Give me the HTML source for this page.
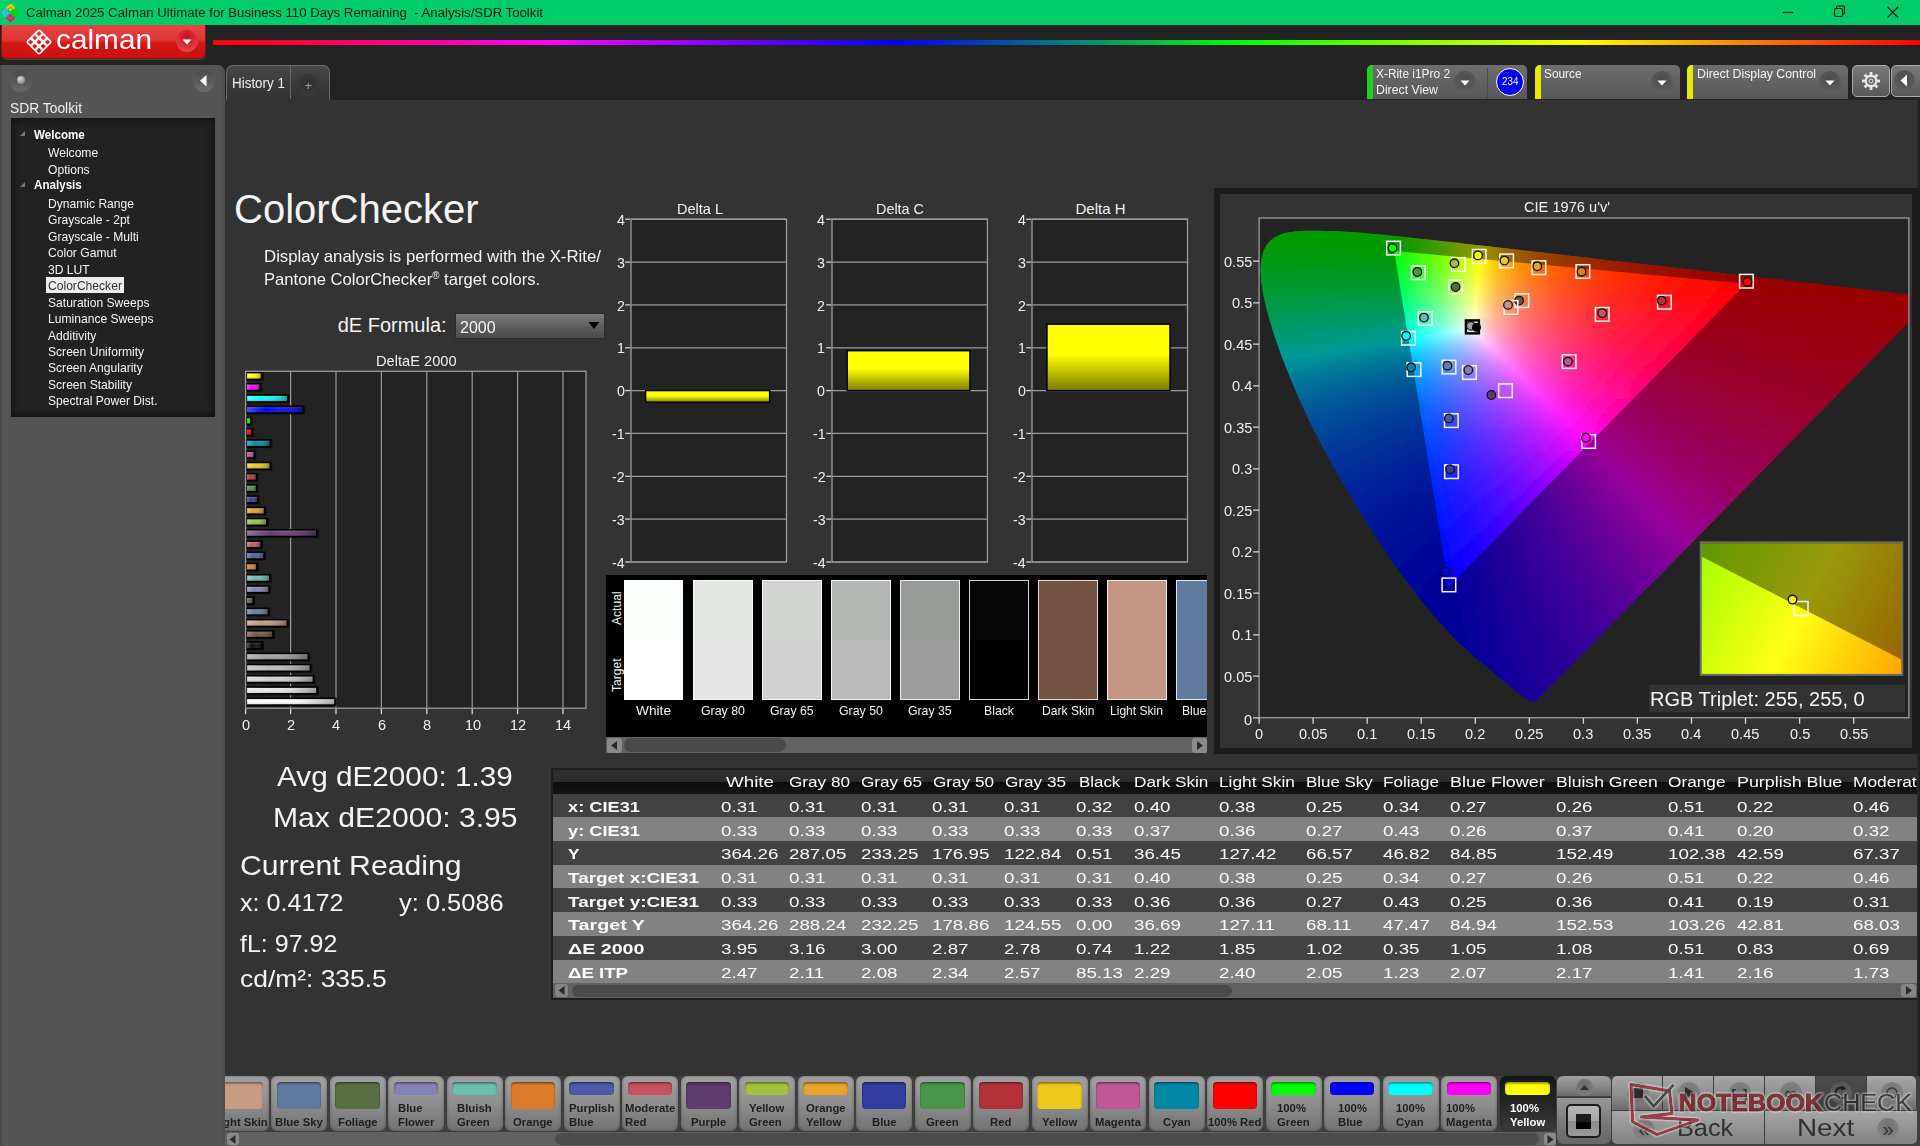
<!DOCTYPE html><html><head><meta charset="utf-8"><title>Calman</title><style>html,body{margin:0;padding:0;background:#333;}body{width:1920px;height:1146px;position:relative;overflow:hidden;font-family:"Liberation Sans",sans-serif;}div,svg{position:absolute;box-sizing:border-box}.t{position:absolute;white-space:nowrap;transform-origin:0 50%;display:block}svg text{font-family:"Liberation Sans",sans-serif}</style></head><body><div style="left:0px;top:0px;width:1920px;height:25px;background:#00cc6a"></div><svg style="left:0;top:0" width="24" height="25" viewBox="0 0 24 25" fill="none" stroke-width="2.3" stroke-linecap="round" stroke-linejoin="round"><path d="M7 8.1L10.5 4.7L14 8.1" stroke="#ffc800"/><path d="M10.5 7.7l1.9 1.9l-1.9 1.9l-1.9-1.9z" fill="#ffc800"/><path d="M6.1 9.2L2.9 12.8L6.1 16.4" stroke="#38c0ff"/><path d="M7.4 10.9l1.9 1.9l-1.9 1.9l-1.9-1.9z" fill="#38c0ff"/><path d="M15 8.3l4.4 4.5l-4.4 4.5l-4.4-4.5z" fill="#00d800"/><path d="M7 17.5L10.5 20.9L14 17.5" stroke="#ff1060"/><circle cx="10.5" cy="15.9" r="1.9" fill="#ff1060"/></svg><span class="t" style="left:26.0px;top:7.0px;font-size:12.5px;line-height:12.5px;color:#0a1a10;transform:scaleX(1.055);white-space:pre;">Calman 2025 Calman Ultimate for Business 110 Days Remaining  - Analysis/SDR Toolkit</span><svg style="left:1770px;top:0" width="150" height="25" viewBox="1770 0 150 25" fill="none" stroke="#111" stroke-width="1.1"><path d="M1783 12.5h10"/><rect x="1834.5" y="8.5" width="8" height="8" rx="1.5"/><path d="M1836.5 8.5v-1a1.5 1.5 0 0 1 1.5-1.5h5a1.5 1.5 0 0 1 1.5 1.5v5a1.5 1.5 0 0 1-1.5 1.5h-0.5"/><path d="M1887.5 7l10.5 10.5M1898 7l-10.5 10.5"/></svg><div style="left:0px;top:25px;width:1920px;height:75px;background:#232323"></div><div style="left:213px;top:40px;width:1707px;height:5px;background:linear-gradient(90deg,#f00 0%,#f0f 20%,#00f 40%,#0f0 60%,#ff0 80%,#f00 100%)"></div><div style="left:1px;top:25px;width:205px;height:34px;background:linear-gradient(#e64545 0%,#e03434 45%,#d21515 55%,#cc0f0f 100%);border-radius:0 0 6px 6px;border:1px solid #7a1a1a;border-top:none;box-shadow:0 1px 0 #444"></div><svg style="left:24px;top:27px" width="30" height="30" viewBox="-15 -15 30 30"><path transform="rotate(45)" fill="#fff" fill-rule="evenodd" d="M-9.4 -7.4a2 2 0 0 1 2-2h14.8a2 2 0 0 1 2 2v14.8a2 2 0 0 1-2 2h-14.8a2 2 0 0 1-2-2zM-7.85 -7.85h3.70v3.70h-3.70zM-7.85 -1.85h3.70v3.70h-3.70zM-7.85 4.15h3.70v3.70h-3.70zM-1.85 -7.85h3.70v3.70h-3.70zM-1.85 -1.85h3.70v3.70h-3.70zM-1.85 4.15h3.70v3.70h-3.70zM4.15 -7.85h3.70v3.70h-3.70zM4.15 -1.85h3.70v3.70h-3.70zM4.15 4.15h3.70v3.70h-3.70z"/></svg><span class="t" style="left:56.0px;top:25.6px;font-size:27.5px;line-height:27.5px;color:#fff;transform:scaleX(1.083);">calman</span><div style="left:175.5px;top:30.2px;width:22px;height:22px;border-radius:50%;background:radial-gradient(circle at 50% 30%,#c8101c,#e85050 95%)"></div><svg style="left:175.5px;top:30.2px" width="22" height="22"><path d="M6.5 9.5h9l-4.5 5z" fill="#fff"/></svg><div style="left:0px;top:65px;width:224.5px;height:1085px;background:#555;border-radius:0 7px 0 0;border-left:2px solid #484848;border-right:2px solid #4f4f4f"></div><div style="left:10px;top:70px;width:22px;height:22px;border-radius:50%;background:linear-gradient(#4a4a4a,#5a5a5a 55%,#6a6a6a)"></div><div style="left:17px;top:75.5px;width:8px;height:8px;border-radius:50%;background:radial-gradient(circle at 40% 35%,#ddd,#888 70%,#666)"></div><div style="left:192.5px;top:69.5px;width:22px;height:22px;border-radius:50%;background:linear-gradient(#4c4c4c,#5c5c5c 55%,#6c6c6c)"></div><svg style="left:192.5px;top:69.5px" width="22" height="22"><path d="M13.5 5v11.5l-6.5-5.75z" fill="#fff"/></svg><span class="t" style="left:10.0px;top:100.1px;font-size:15px;line-height:15px;color:#f0f0f0;transform:scaleX(0.922);">SDR Toolkit</span><div style="left:10.7px;top:118.1px;width:204.7px;height:298.8px;background:#222;box-shadow:inset 0 0 6px 2px #111"></div><span class="t" style="left:33.9px;top:128.5px;font-size:12.5px;line-height:12.5px;color:#fff;font-weight:700;transform:scaleX(0.930);">Welcome</span><svg style="left:19px;top:130.1px" width="8" height="8"><path d="M6 1v5h-5z" fill="#777"/></svg><span class="t" style="left:48.4px;top:145.9px;font-size:13px;line-height:13px;color:#f4f4f4;transform:scaleX(0.930);">Welcome</span><span class="t" style="left:48.4px;top:162.7px;font-size:13px;line-height:13px;color:#f4f4f4;transform:scaleX(0.930);">Options</span><span class="t" style="left:33.9px;top:179.2px;font-size:12.5px;line-height:12.5px;color:#fff;font-weight:700;transform:scaleX(0.930);">Analysis</span><svg style="left:19px;top:180.8px" width="8" height="8"><path d="M6 1v5h-5z" fill="#777"/></svg><span class="t" style="left:48.4px;top:196.6px;font-size:13px;line-height:13px;color:#f4f4f4;transform:scaleX(0.930);">Dynamic Range</span><span class="t" style="left:48.4px;top:213.1px;font-size:13px;line-height:13px;color:#f4f4f4;transform:scaleX(0.930);">Grayscale - 2pt</span><span class="t" style="left:48.4px;top:229.9px;font-size:13px;line-height:13px;color:#f4f4f4;transform:scaleX(0.930);">Grayscale - Multi</span><span class="t" style="left:48.4px;top:246.4px;font-size:13px;line-height:13px;color:#f4f4f4;transform:scaleX(0.930);">Color Gamut</span><span class="t" style="left:48.4px;top:262.8px;font-size:13px;line-height:13px;color:#f4f4f4;transform:scaleX(0.930);">3D LUT</span><div style="left:46.2px;top:277px;width:77.5px;height:15.8px;background:#ececec"></div><span class="t" style="left:48.4px;top:279.3px;font-size:13px;line-height:13px;color:#333;transform:scaleX(0.930);">ColorChecker</span><span class="t" style="left:48.4px;top:295.8px;font-size:13px;line-height:13px;color:#f4f4f4;transform:scaleX(0.930);">Saturation Sweeps</span><span class="t" style="left:48.4px;top:312.2px;font-size:13px;line-height:13px;color:#f4f4f4;transform:scaleX(0.930);">Luminance Sweeps</span><span class="t" style="left:48.4px;top:328.7px;font-size:13px;line-height:13px;color:#f4f4f4;transform:scaleX(0.930);">Additivity</span><span class="t" style="left:48.4px;top:345.2px;font-size:13px;line-height:13px;color:#f4f4f4;transform:scaleX(0.930);">Screen Uniformity</span><span class="t" style="left:48.4px;top:361.0px;font-size:13px;line-height:13px;color:#f4f4f4;transform:scaleX(0.930);">Screen Angularity</span><span class="t" style="left:48.4px;top:377.5px;font-size:13px;line-height:13px;color:#f4f4f4;transform:scaleX(0.930);">Screen Stability</span><span class="t" style="left:48.4px;top:394.0px;font-size:13px;line-height:13px;color:#f4f4f4;transform:scaleX(0.930);">Spectral Power Dist.</span><div style="left:225.5px;top:65px;width:104px;height:35px;background:linear-gradient(#484848,#383838 60%,#333);border:1px solid #6a6a6a;border-bottom:none;border-radius:7px 7px 0 0"></div><div style="left:290px;top:66px;width:1px;height:33px;background:#666"></div><span class="t" style="left:232.0px;top:75.7px;font-size:14.5px;line-height:14.5px;color:#f0f0f0;transform:scaleX(0.926);">History 1</span><div style="left:297px;top:73.8px;width:22px;height:22px;border-radius:50%;background:radial-gradient(circle at 50% 40%,#2e2e2e,#3a3a3a 70%,#444)"></div><span class="t" style="left:304.4px;top:78.5px;font-size:13px;line-height:13px;color:#999;">+</span><div style="left:1366.7px;top:65.3px;width:160px;height:33.6px;background:linear-gradient(#6e6e6e,#626262 50%,#585858);border-radius:5px 5px 0 0;overflow:hidden"><div style="left:0px;top:0px;width:6px;height:34px;background:#1fd01f"></div></div><span class="t" style="left:1376.0px;top:67.7px;font-size:12.5px;line-height:12.5px;color:#f4f4f4;transform:scaleX(0.951);">X-Rite i1Pro 2</span><span class="t" style="left:1376.0px;top:84.4px;font-size:12.5px;line-height:12.5px;color:#f4f4f4;transform:scaleX(0.984);">Direct View</span><div style="left:1454px;top:70.7px;width:22px;height:22px;border-radius:50%;background:radial-gradient(circle at 50% 35%,#4c4c4c,#5a5a5a 65%,#6c6c6c)"></div><svg style="left:1454px;top:70.7px" width="22" height="22"><path d="M6.5 9.5h9l-4.5 5z" fill="#fff"/></svg><div style="left:1486.5px;top:68px;width:1.5px;height:31px;background:#4a4a4a"></div><div style="left:1495.5px;top:67.5px;width:28.5px;height:28.5px;border-radius:50%;background:#0000f0;border:1.3px solid #fff"></div><span class="t" style="left:1501.6px;top:76.7px;font-size:10.3px;line-height:10.3px;color:#fff;transform:scaleX(0.950);">234</span><div style="left:1534.5px;top:65.3px;width:145.5px;height:33.6px;background:linear-gradient(#6e6e6e,#626262 50%,#585858);border-radius:5px 5px 0 0;overflow:hidden"><div style="left:0px;top:0px;width:6px;height:34px;background:#e8e800"></div></div><span class="t" style="left:1543.5px;top:67.7px;font-size:12.5px;line-height:12.5px;color:#f4f4f4;transform:scaleX(0.947);">Source</span><div style="left:1650.5px;top:70.7px;width:22px;height:22px;border-radius:50%;background:radial-gradient(circle at 50% 35%,#4c4c4c,#5a5a5a 65%,#6c6c6c)"></div><svg style="left:1650.5px;top:70.7px" width="22" height="22"><path d="M6.5 9.5h9l-4.5 5z" fill="#fff"/></svg><div style="left:1687.4px;top:65.3px;width:161px;height:33.6px;background:linear-gradient(#6e6e6e,#626262 50%,#585858);border-radius:5px 5px 0 0;overflow:hidden"><div style="left:0px;top:0px;width:6px;height:34px;background:#e8e800"></div></div><span class="t" style="left:1696.5px;top:67.7px;font-size:12.5px;line-height:12.5px;color:#f4f4f4;transform:scaleX(0.985);">Direct Display Control</span><div style="left:1818.5px;top:70.7px;width:22px;height:22px;border-radius:50%;background:radial-gradient(circle at 50% 35%,#4c4c4c,#5a5a5a 65%,#6c6c6c)"></div><svg style="left:1818.5px;top:70.7px" width="22" height="22"><path d="M6.5 9.5h9l-4.5 5z" fill="#fff"/></svg><div style="left:1852px;top:64.5px;width:37.5px;height:32px;background:linear-gradient(#7a7a7a,#686868 50%,#5a5a5a);border:1px solid #aaa;border-radius:5px"></div><svg style="left:1859.5px;top:69.5px" width="22" height="22" viewBox="-11 -11 22 22"><g fill="none" stroke="#e8e8e8"><circle r="5.2" stroke-width="2.2"/><circle r="2" stroke-width="1"/><rect x="-1.4" y="-9" width="2.8" height="3.4" fill="#e8e8e8" stroke="none" transform="rotate(0)"/><rect x="-1.4" y="-9" width="2.8" height="3.4" fill="#e8e8e8" stroke="none" transform="rotate(45)"/><rect x="-1.4" y="-9" width="2.8" height="3.4" fill="#e8e8e8" stroke="none" transform="rotate(90)"/><rect x="-1.4" y="-9" width="2.8" height="3.4" fill="#e8e8e8" stroke="none" transform="rotate(135)"/><rect x="-1.4" y="-9" width="2.8" height="3.4" fill="#e8e8e8" stroke="none" transform="rotate(180)"/><rect x="-1.4" y="-9" width="2.8" height="3.4" fill="#e8e8e8" stroke="none" transform="rotate(225)"/><rect x="-1.4" y="-9" width="2.8" height="3.4" fill="#e8e8e8" stroke="none" transform="rotate(270)"/><rect x="-1.4" y="-9" width="2.8" height="3.4" fill="#e8e8e8" stroke="none" transform="rotate(315)"/></g></svg><div style="left:1890.5px;top:64.5px;width:34px;height:32px;background:linear-gradient(#7a7a7a,#686868 50%,#5a5a5a);border:1px solid #aaa;border-radius:5px"></div><div style="left:1894px;top:70px;width:21px;height:21px;border-radius:50%;background:radial-gradient(circle at 50% 35%,#4c4c4c,#5a5a5a 65%,#6c6c6c)"></div><svg style="left:1894px;top:70px" width="21" height="21"><path d="M13 4.5v12l-6.5-6z" fill="#fff"/></svg><div style="left:225px;top:100px;width:1695px;height:976px;background:#333"></div><div style="left:1915.5px;top:99px;width:4.5px;height:977px;background:linear-gradient(90deg,#333,#1b1b1b)"></div><span class="t" style="left:234.1px;top:189.1px;font-size:40px;line-height:40px;color:#f4f4f4;">ColorChecker</span><span class="t" style="left:264.0px;top:247.9px;font-size:17px;line-height:17px;color:#f4f4f4;transform:scaleX(0.988);">Display analysis is performed with the X-Rite/</span><span class="t" style="left:264.0px;top:271.0px;font-size:17px;line-height:17px;color:#f4f4f4;transform:scaleX(0.978);">Pantone ColorChecker<span style="font-size:10px;position:relative;top:-6px">®</span> target colors.</span><span class="t" style="left:337.7px;top:315.4px;font-size:20px;line-height:20px;color:#f4f4f4;">dE Formula:</span><div style="left:455px;top:313px;width:150px;height:25.5px;background:linear-gradient(#7a7a7a,#5c5c5c 55%,#4a4a4a);border:1px solid #2a2a2a"></div><span class="t" style="left:459.6px;top:319.0px;font-size:17px;line-height:17px;color:#f4f4f4;transform:scaleX(0.939);">2000</span><svg style="left:588px;top:321px" width="12" height="9"><path d="M0.5 1h11l-5.5 7z" fill="#000"/></svg><svg style="left:0;top:0" width="640" height="760" viewBox="0 0 640 760"><defs><linearGradient id="bs" x1="0" x2="1" y1="0" y2="0"><stop offset="0" stop-color="#fff" stop-opacity=".28"/><stop offset=".35" stop-color="#fff" stop-opacity="0"/><stop offset="1" stop-color="#000" stop-opacity=".35"/></linearGradient><linearGradient id="bv" x1="0" x2="0" y1="0" y2="1"><stop offset="0" stop-color="#fff" stop-opacity=".15"/><stop offset=".5" stop-color="#fff" stop-opacity="0"/><stop offset="1" stop-color="#000" stop-opacity=".2"/></linearGradient></defs><rect x="245.6" y="371.3" width="340.4" height="336.9" fill="#232323"/><path d="M290.6 371.3V708.2" stroke="#9c9c9c" stroke-width="1.2"/><path d="M290.6 709V714.2" stroke="#d4d4d4" stroke-width="1.3"/><path d="M336.0 371.3V708.2" stroke="#9c9c9c" stroke-width="1.2"/><path d="M336.0 709V714.2" stroke="#d4d4d4" stroke-width="1.3"/><path d="M381.4 371.3V708.2" stroke="#9c9c9c" stroke-width="1.2"/><path d="M381.4 709V714.2" stroke="#d4d4d4" stroke-width="1.3"/><path d="M426.8 371.3V708.2" stroke="#9c9c9c" stroke-width="1.2"/><path d="M426.8 709V714.2" stroke="#d4d4d4" stroke-width="1.3"/><path d="M472.2 371.3V708.2" stroke="#9c9c9c" stroke-width="1.2"/><path d="M472.2 709V714.2" stroke="#d4d4d4" stroke-width="1.3"/><path d="M517.6 371.3V708.2" stroke="#9c9c9c" stroke-width="1.2"/><path d="M517.6 709V714.2" stroke="#d4d4d4" stroke-width="1.3"/><path d="M563.0 371.3V708.2" stroke="#9c9c9c" stroke-width="1.2"/><path d="M563.0 709V714.2" stroke="#d4d4d4" stroke-width="1.3"/><path d="M245.6 709V714.2" stroke="#d4d4d4" stroke-width="1.3"/><rect x="246.1" y="371.8" width="17.5" height="9" fill="#000" opacity=".6"/><rect x="246.4" y="372.7" width="15.1" height="6.6" fill="#ffff00" stroke="#000" stroke-width="1.5"/><rect x="246.9" y="373.2" width="14.1" height="5.6" fill="url(#bs)"/><rect x="246.9" y="373.2" width="14.1" height="5.6" fill="url(#bv)"/><rect x="246.1" y="383.0" width="16.0" height="9" fill="#000" opacity=".6"/><rect x="246.4" y="383.9" width="13.6" height="6.6" fill="#ff00ff" stroke="#000" stroke-width="1.5"/><rect x="246.9" y="384.4" width="12.6" height="5.6" fill="url(#bs)"/><rect x="246.9" y="384.4" width="12.6" height="5.6" fill="url(#bv)"/><rect x="246.1" y="394.3" width="43.6" height="9" fill="#000" opacity=".6"/><rect x="246.4" y="395.2" width="41.2" height="6.6" fill="#00ffff" stroke="#000" stroke-width="1.5"/><rect x="246.9" y="395.7" width="40.2" height="5.6" fill="url(#bs)"/><rect x="246.9" y="395.7" width="40.2" height="5.6" fill="url(#bv)"/><rect x="246.1" y="405.5" width="59.1" height="9" fill="#000" opacity=".6"/><rect x="246.4" y="406.4" width="56.7" height="6.6" fill="#0000ff" stroke="#000" stroke-width="1.5"/><rect x="246.9" y="406.9" width="55.7" height="5.6" fill="url(#bs)"/><rect x="246.9" y="406.9" width="55.7" height="5.6" fill="url(#bv)"/><rect x="246.1" y="416.7" width="6.9" height="9" fill="#000" opacity=".6"/><rect x="246.4" y="417.6" width="4.5" height="6.6" fill="#00ff00" stroke="#000" stroke-width="1.5"/><rect x="246.9" y="418.1" width="3.5" height="5.6" fill="url(#bs)"/><rect x="246.9" y="418.1" width="3.5" height="5.6" fill="url(#bv)"/><rect x="246.1" y="428.0" width="8.0" height="9" fill="#000" opacity=".6"/><rect x="246.4" y="428.9" width="5.6" height="6.6" fill="#ff0000" stroke="#000" stroke-width="1.5"/><rect x="246.9" y="429.4" width="4.6" height="5.6" fill="url(#bs)"/><rect x="246.9" y="429.4" width="4.6" height="5.6" fill="url(#bv)"/><rect x="246.1" y="439.2" width="26.2" height="9" fill="#000" opacity=".6"/><rect x="246.4" y="440.1" width="23.8" height="6.6" fill="#0885a1" stroke="#000" stroke-width="1.5"/><rect x="246.9" y="440.6" width="22.8" height="5.6" fill="url(#bs)"/><rect x="246.9" y="440.6" width="22.8" height="5.6" fill="url(#bv)"/><rect x="246.1" y="450.4" width="10.3" height="9" fill="#000" opacity=".6"/><rect x="246.4" y="451.3" width="7.9" height="6.6" fill="#bb5695" stroke="#000" stroke-width="1.5"/><rect x="246.9" y="451.8" width="6.9" height="5.6" fill="url(#bs)"/><rect x="246.9" y="451.8" width="6.9" height="5.6" fill="url(#bv)"/><rect x="246.1" y="461.7" width="26.2" height="9" fill="#000" opacity=".6"/><rect x="246.4" y="462.6" width="23.8" height="6.6" fill="#e7c71f" stroke="#000" stroke-width="1.5"/><rect x="246.9" y="463.1" width="22.8" height="5.6" fill="url(#bs)"/><rect x="246.9" y="463.1" width="22.8" height="5.6" fill="url(#bv)"/><rect x="246.1" y="472.9" width="12.5" height="9" fill="#000" opacity=".6"/><rect x="246.4" y="473.8" width="10.2" height="6.6" fill="#af363c" stroke="#000" stroke-width="1.5"/><rect x="246.9" y="474.3" width="9.1" height="5.6" fill="url(#bs)"/><rect x="246.9" y="474.3" width="9.1" height="5.6" fill="url(#bv)"/><rect x="246.1" y="484.1" width="12.5" height="9" fill="#000" opacity=".6"/><rect x="246.4" y="485.0" width="10.2" height="6.6" fill="#469449" stroke="#000" stroke-width="1.5"/><rect x="246.9" y="485.5" width="9.1" height="5.6" fill="url(#bs)"/><rect x="246.9" y="485.5" width="9.1" height="5.6" fill="url(#bv)"/><rect x="246.1" y="495.3" width="13.7" height="9" fill="#000" opacity=".6"/><rect x="246.4" y="496.2" width="11.3" height="6.6" fill="#383d96" stroke="#000" stroke-width="1.5"/><rect x="246.9" y="496.7" width="10.3" height="5.6" fill="url(#bs)"/><rect x="246.9" y="496.7" width="10.3" height="5.6" fill="url(#bv)"/><rect x="246.1" y="506.6" width="20.5" height="9" fill="#000" opacity=".6"/><rect x="246.4" y="507.5" width="18.1" height="6.6" fill="#e0a32e" stroke="#000" stroke-width="1.5"/><rect x="246.9" y="508.0" width="17.1" height="5.6" fill="url(#bs)"/><rect x="246.9" y="508.0" width="17.1" height="5.6" fill="url(#bv)"/><rect x="246.1" y="517.8" width="22.8" height="9" fill="#000" opacity=".6"/><rect x="246.4" y="518.7" width="20.4" height="6.6" fill="#9dbc40" stroke="#000" stroke-width="1.5"/><rect x="246.9" y="519.2" width="19.4" height="5.6" fill="url(#bs)"/><rect x="246.9" y="519.2" width="19.4" height="5.6" fill="url(#bv)"/><rect x="246.1" y="529.0" width="72.7" height="9" fill="#000" opacity=".6"/><rect x="246.4" y="529.9" width="70.3" height="6.6" fill="#5e3c6c" stroke="#000" stroke-width="1.5"/><rect x="246.9" y="530.4" width="69.3" height="5.6" fill="url(#bs)"/><rect x="246.9" y="530.4" width="69.3" height="5.6" fill="url(#bv)"/><rect x="246.1" y="540.3" width="16.9" height="9" fill="#000" opacity=".6"/><rect x="246.4" y="541.2" width="14.5" height="6.6" fill="#c15a63" stroke="#000" stroke-width="1.5"/><rect x="246.9" y="541.7" width="13.5" height="5.6" fill="url(#bs)"/><rect x="246.9" y="541.7" width="13.5" height="5.6" fill="url(#bv)"/><rect x="246.1" y="551.5" width="20.0" height="9" fill="#000" opacity=".6"/><rect x="246.4" y="552.4" width="17.6" height="6.6" fill="#505ba6" stroke="#000" stroke-width="1.5"/><rect x="246.9" y="552.9" width="16.6" height="5.6" fill="url(#bs)"/><rect x="246.9" y="552.9" width="16.6" height="5.6" fill="url(#bv)"/><rect x="246.1" y="562.7" width="12.8" height="9" fill="#000" opacity=".6"/><rect x="246.4" y="563.6" width="10.4" height="6.6" fill="#d67e2c" stroke="#000" stroke-width="1.5"/><rect x="246.9" y="564.1" width="9.4" height="5.6" fill="url(#bs)"/><rect x="246.9" y="564.1" width="9.4" height="5.6" fill="url(#bv)"/><rect x="246.1" y="574.0" width="25.7" height="9" fill="#000" opacity=".6"/><rect x="246.4" y="574.9" width="23.3" height="6.6" fill="#67bdaa" stroke="#000" stroke-width="1.5"/><rect x="246.9" y="575.4" width="22.3" height="5.6" fill="url(#bs)"/><rect x="246.9" y="575.4" width="22.3" height="5.6" fill="url(#bv)"/><rect x="246.1" y="585.2" width="25.0" height="9" fill="#000" opacity=".6"/><rect x="246.4" y="586.1" width="22.6" height="6.6" fill="#8580b1" stroke="#000" stroke-width="1.5"/><rect x="246.9" y="586.6" width="21.6" height="5.6" fill="url(#bs)"/><rect x="246.9" y="586.6" width="21.6" height="5.6" fill="url(#bv)"/><rect x="246.1" y="596.4" width="9.1" height="9" fill="#000" opacity=".6"/><rect x="246.4" y="597.3" width="6.7" height="6.6" fill="#576c43" stroke="#000" stroke-width="1.5"/><rect x="246.9" y="597.8" width="5.7" height="5.6" fill="url(#bs)"/><rect x="246.9" y="597.8" width="5.7" height="5.6" fill="url(#bv)"/><rect x="246.1" y="607.6" width="24.4" height="9" fill="#000" opacity=".6"/><rect x="246.4" y="608.5" width="22.0" height="6.6" fill="#627a9d" stroke="#000" stroke-width="1.5"/><rect x="246.9" y="609.0" width="21.0" height="5.6" fill="url(#bs)"/><rect x="246.9" y="609.0" width="21.0" height="5.6" fill="url(#bv)"/><rect x="246.1" y="618.9" width="43.2" height="9" fill="#000" opacity=".6"/><rect x="246.4" y="619.8" width="40.8" height="6.6" fill="#c29682" stroke="#000" stroke-width="1.5"/><rect x="246.9" y="620.3" width="39.8" height="5.6" fill="url(#bs)"/><rect x="246.9" y="620.3" width="39.8" height="5.6" fill="url(#bv)"/><rect x="246.1" y="630.1" width="28.9" height="9" fill="#000" opacity=".6"/><rect x="246.4" y="631.0" width="26.5" height="6.6" fill="#735244" stroke="#000" stroke-width="1.5"/><rect x="246.9" y="631.5" width="25.5" height="5.6" fill="url(#bs)"/><rect x="246.9" y="631.5" width="25.5" height="5.6" fill="url(#bv)"/><rect x="246.1" y="641.3" width="18.0" height="9" fill="#000" opacity=".6"/><rect x="246.4" y="642.2" width="15.6" height="6.6" fill="#0a0a0a" stroke="#000" stroke-width="1.5"/><rect x="246.9" y="642.7" width="14.6" height="5.6" fill="url(#bs)"/><rect x="246.9" y="642.7" width="14.6" height="5.6" fill="url(#bv)"/><rect x="246.1" y="652.6" width="64.3" height="9" fill="#000" opacity=".6"/><rect x="246.4" y="653.5" width="61.9" height="6.6" fill="#9e9e9e" stroke="#000" stroke-width="1.5"/><rect x="246.9" y="654.0" width="60.9" height="5.6" fill="url(#bs)"/><rect x="246.9" y="654.0" width="60.9" height="5.6" fill="url(#bv)"/><rect x="246.1" y="663.8" width="66.3" height="9" fill="#000" opacity=".6"/><rect x="246.4" y="664.7" width="63.9" height="6.6" fill="#bababa" stroke="#000" stroke-width="1.5"/><rect x="246.9" y="665.2" width="62.9" height="5.6" fill="url(#bs)"/><rect x="246.9" y="665.2" width="62.9" height="5.6" fill="url(#bv)"/><rect x="246.1" y="675.0" width="69.3" height="9" fill="#000" opacity=".6"/><rect x="246.4" y="675.9" width="66.9" height="6.6" fill="#d1d1d1" stroke="#000" stroke-width="1.5"/><rect x="246.9" y="676.4" width="65.9" height="5.6" fill="url(#bs)"/><rect x="246.9" y="676.4" width="65.9" height="5.6" fill="url(#bv)"/><rect x="246.1" y="686.3" width="72.9" height="9" fill="#000" opacity=".6"/><rect x="246.4" y="687.2" width="70.5" height="6.6" fill="#e6e6e6" stroke="#000" stroke-width="1.5"/><rect x="246.9" y="687.7" width="69.5" height="5.6" fill="url(#bs)"/><rect x="246.9" y="687.7" width="69.5" height="5.6" fill="url(#bv)"/><rect x="246.1" y="697.5" width="90.9" height="9" fill="#000" opacity=".6"/><rect x="246.4" y="698.4" width="88.5" height="6.6" fill="#ffffff" stroke="#000" stroke-width="1.5"/><rect x="246.9" y="698.9" width="87.5" height="5.6" fill="url(#bs)"/><rect x="246.9" y="698.9" width="87.5" height="5.6" fill="url(#bv)"/><rect x="245.6" y="371.3" width="340.4" height="336.9" fill="none" stroke="#9c9c9c" stroke-width="1.3"/></svg><span class="t" style="left:375.9px;top:353.0px;font-size:15px;line-height:15px;color:#f0f0f0;transform:scaleX(0.977);">DeltaE 2000</span><span class="t" style="left:241.6px;top:716.7px;font-size:15px;line-height:15px;color:#f0f0f0;transform:scaleX(0.970);">0</span><span class="t" style="left:287.0px;top:716.7px;font-size:15px;line-height:15px;color:#f0f0f0;transform:scaleX(0.970);">2</span><span class="t" style="left:332.4px;top:716.7px;font-size:15px;line-height:15px;color:#f0f0f0;transform:scaleX(0.970);">4</span><span class="t" style="left:377.8px;top:716.7px;font-size:15px;line-height:15px;color:#f0f0f0;transform:scaleX(0.970);">6</span><span class="t" style="left:423.2px;top:716.7px;font-size:15px;line-height:15px;color:#f0f0f0;transform:scaleX(0.970);">8</span><span class="t" style="left:464.5px;top:716.7px;font-size:15px;line-height:15px;color:#f0f0f0;transform:scaleX(0.970);">10</span><span class="t" style="left:509.9px;top:716.7px;font-size:15px;line-height:15px;color:#f0f0f0;transform:scaleX(0.970);">12</span><span class="t" style="left:555.3px;top:716.7px;font-size:15px;line-height:15px;color:#f0f0f0;transform:scaleX(0.970);">14</span><svg style="left:606.4px;top:190px" width="200" height="390" viewBox="606.4 190 200 390"><defs><linearGradient id="yb" x1="0" x2="0" y1="0" y2="1"><stop offset="0" stop-color="#ff0"/><stop offset=".45" stop-color="#ff0"/><stop offset="1" stop-color="#7d7d00"/></linearGradient></defs><rect x="631.4" y="219.2" width="155.5" height="342.8" fill="#232323"/><path d="M631.4 219.2H786.9" stroke="#9c9c9c" stroke-width="1.2"/><path d="M625.6 219.2H630.6" stroke="#d4d4d4" stroke-width="1.3"/><path d="M631.4 262.1H786.9" stroke="#9c9c9c" stroke-width="1.2"/><path d="M625.6 262.1H630.6" stroke="#d4d4d4" stroke-width="1.3"/><path d="M631.4 304.9H786.9" stroke="#9c9c9c" stroke-width="1.2"/><path d="M625.6 304.9H630.6" stroke="#d4d4d4" stroke-width="1.3"/><path d="M631.4 347.8H786.9" stroke="#9c9c9c" stroke-width="1.2"/><path d="M625.6 347.8H630.6" stroke="#d4d4d4" stroke-width="1.3"/><path d="M631.4 390.6H786.9" stroke="#9c9c9c" stroke-width="1.2"/><path d="M625.6 390.6H630.6" stroke="#d4d4d4" stroke-width="1.3"/><path d="M631.4 433.4H786.9" stroke="#9c9c9c" stroke-width="1.2"/><path d="M625.6 433.4H630.6" stroke="#d4d4d4" stroke-width="1.3"/><path d="M631.4 476.3H786.9" stroke="#9c9c9c" stroke-width="1.2"/><path d="M625.6 476.3H630.6" stroke="#d4d4d4" stroke-width="1.3"/><path d="M631.4 519.1H786.9" stroke="#9c9c9c" stroke-width="1.2"/><path d="M625.6 519.1H630.6" stroke="#d4d4d4" stroke-width="1.3"/><path d="M631.4 562.0H786.9" stroke="#9c9c9c" stroke-width="1.2"/><path d="M625.6 562.0H630.6" stroke="#d4d4d4" stroke-width="1.3"/><rect x="631.4" y="219.2" width="155.5" height="342.8" fill="none" stroke="#9c9c9c" stroke-width="1.3"/><rect x="646" y="390.6" width="124" height="11.6" fill="url(#yb)" stroke="#000" stroke-width="1.4"/></svg><span class="t" style="left:676.7px;top:201.1px;font-size:15px;line-height:15px;color:#f0f0f0;transform:scaleX(0.968);">Delta L</span><span class="t" style="left:617.0px;top:211.8px;font-size:15px;line-height:15px;color:#f0f0f0;transform:scaleX(0.950);">4</span><span class="t" style="left:617.0px;top:254.7px;font-size:15px;line-height:15px;color:#f0f0f0;transform:scaleX(0.950);">3</span><span class="t" style="left:617.0px;top:297.5px;font-size:15px;line-height:15px;color:#f0f0f0;transform:scaleX(0.950);">2</span><span class="t" style="left:617.0px;top:340.4px;font-size:15px;line-height:15px;color:#f0f0f0;transform:scaleX(0.950);">1</span><span class="t" style="left:617.0px;top:383.2px;font-size:15px;line-height:15px;color:#f0f0f0;transform:scaleX(0.950);">0</span><span class="t" style="left:612.2px;top:426.1px;font-size:15px;line-height:15px;color:#f0f0f0;transform:scaleX(0.950);">-1</span><span class="t" style="left:612.2px;top:468.9px;font-size:15px;line-height:15px;color:#f0f0f0;transform:scaleX(0.950);">-2</span><span class="t" style="left:612.2px;top:511.8px;font-size:15px;line-height:15px;color:#f0f0f0;transform:scaleX(0.950);">-3</span><span class="t" style="left:612.2px;top:554.6px;font-size:15px;line-height:15px;color:#f0f0f0;transform:scaleX(0.950);">-4</span><svg style="left:806.8px;top:190px" width="200" height="390" viewBox="806.8 190 200 390"><rect x="831.8" y="219.2" width="155.4" height="342.8" fill="#232323"/><path d="M831.8 219.2H987.2" stroke="#9c9c9c" stroke-width="1.2"/><path d="M826 219.2H831" stroke="#d4d4d4" stroke-width="1.3"/><path d="M831.8 262.1H987.2" stroke="#9c9c9c" stroke-width="1.2"/><path d="M826 262.1H831" stroke="#d4d4d4" stroke-width="1.3"/><path d="M831.8 304.9H987.2" stroke="#9c9c9c" stroke-width="1.2"/><path d="M826 304.9H831" stroke="#d4d4d4" stroke-width="1.3"/><path d="M831.8 347.8H987.2" stroke="#9c9c9c" stroke-width="1.2"/><path d="M826 347.8H831" stroke="#d4d4d4" stroke-width="1.3"/><path d="M831.8 390.6H987.2" stroke="#9c9c9c" stroke-width="1.2"/><path d="M826 390.6H831" stroke="#d4d4d4" stroke-width="1.3"/><path d="M831.8 433.4H987.2" stroke="#9c9c9c" stroke-width="1.2"/><path d="M826 433.4H831" stroke="#d4d4d4" stroke-width="1.3"/><path d="M831.8 476.3H987.2" stroke="#9c9c9c" stroke-width="1.2"/><path d="M826 476.3H831" stroke="#d4d4d4" stroke-width="1.3"/><path d="M831.8 519.1H987.2" stroke="#9c9c9c" stroke-width="1.2"/><path d="M826 519.1H831" stroke="#d4d4d4" stroke-width="1.3"/><path d="M831.8 562.0H987.2" stroke="#9c9c9c" stroke-width="1.2"/><path d="M826 562.0H831" stroke="#d4d4d4" stroke-width="1.3"/><rect x="831.8" y="219.2" width="155.4" height="342.8" fill="none" stroke="#9c9c9c" stroke-width="1.3"/><rect x="847" y="350.7" width="122.7" height="39.9" fill="url(#yb)" stroke="#000" stroke-width="1.4"/></svg><span class="t" style="left:876.0px;top:201.1px;font-size:15px;line-height:15px;color:#f0f0f0;transform:scaleX(0.960);">Delta C</span><span class="t" style="left:817.4px;top:211.8px;font-size:15px;line-height:15px;color:#f0f0f0;transform:scaleX(0.950);">4</span><span class="t" style="left:817.4px;top:254.7px;font-size:15px;line-height:15px;color:#f0f0f0;transform:scaleX(0.950);">3</span><span class="t" style="left:817.4px;top:297.5px;font-size:15px;line-height:15px;color:#f0f0f0;transform:scaleX(0.950);">2</span><span class="t" style="left:817.4px;top:340.4px;font-size:15px;line-height:15px;color:#f0f0f0;transform:scaleX(0.950);">1</span><span class="t" style="left:817.4px;top:383.2px;font-size:15px;line-height:15px;color:#f0f0f0;transform:scaleX(0.950);">0</span><span class="t" style="left:812.6px;top:426.1px;font-size:15px;line-height:15px;color:#f0f0f0;transform:scaleX(0.950);">-1</span><span class="t" style="left:812.6px;top:468.9px;font-size:15px;line-height:15px;color:#f0f0f0;transform:scaleX(0.950);">-2</span><span class="t" style="left:812.6px;top:511.8px;font-size:15px;line-height:15px;color:#f0f0f0;transform:scaleX(0.950);">-3</span><span class="t" style="left:812.6px;top:554.6px;font-size:15px;line-height:15px;color:#f0f0f0;transform:scaleX(0.950);">-4</span><svg style="left:1007px;top:190px" width="200" height="390" viewBox="1007 190 200 390"><rect x="1032" y="219.2" width="155.5" height="342.8" fill="#232323"/><path d="M1032 219.2H1187.5" stroke="#9c9c9c" stroke-width="1.2"/><path d="M1026.2 219.2H1031.2" stroke="#d4d4d4" stroke-width="1.3"/><path d="M1032 262.1H1187.5" stroke="#9c9c9c" stroke-width="1.2"/><path d="M1026.2 262.1H1031.2" stroke="#d4d4d4" stroke-width="1.3"/><path d="M1032 304.9H1187.5" stroke="#9c9c9c" stroke-width="1.2"/><path d="M1026.2 304.9H1031.2" stroke="#d4d4d4" stroke-width="1.3"/><path d="M1032 347.8H1187.5" stroke="#9c9c9c" stroke-width="1.2"/><path d="M1026.2 347.8H1031.2" stroke="#d4d4d4" stroke-width="1.3"/><path d="M1032 390.6H1187.5" stroke="#9c9c9c" stroke-width="1.2"/><path d="M1026.2 390.6H1031.2" stroke="#d4d4d4" stroke-width="1.3"/><path d="M1032 433.4H1187.5" stroke="#9c9c9c" stroke-width="1.2"/><path d="M1026.2 433.4H1031.2" stroke="#d4d4d4" stroke-width="1.3"/><path d="M1032 476.3H1187.5" stroke="#9c9c9c" stroke-width="1.2"/><path d="M1026.2 476.3H1031.2" stroke="#d4d4d4" stroke-width="1.3"/><path d="M1032 519.1H1187.5" stroke="#9c9c9c" stroke-width="1.2"/><path d="M1026.2 519.1H1031.2" stroke="#d4d4d4" stroke-width="1.3"/><path d="M1032 562.0H1187.5" stroke="#9c9c9c" stroke-width="1.2"/><path d="M1026.2 562.0H1031.2" stroke="#d4d4d4" stroke-width="1.3"/><rect x="1032" y="219.2" width="155.5" height="342.8" fill="none" stroke="#9c9c9c" stroke-width="1.3"/><rect x="1047" y="324.2" width="123" height="66.4" fill="url(#yb)" stroke="#000" stroke-width="1.4"/></svg><span class="t" style="left:1075.5px;top:201.1px;font-size:15px;line-height:15px;color:#f0f0f0;">Delta H</span><span class="t" style="left:1017.6px;top:211.8px;font-size:15px;line-height:15px;color:#f0f0f0;transform:scaleX(0.950);">4</span><span class="t" style="left:1017.6px;top:254.7px;font-size:15px;line-height:15px;color:#f0f0f0;transform:scaleX(0.950);">3</span><span class="t" style="left:1017.6px;top:297.5px;font-size:15px;line-height:15px;color:#f0f0f0;transform:scaleX(0.950);">2</span><span class="t" style="left:1017.6px;top:340.4px;font-size:15px;line-height:15px;color:#f0f0f0;transform:scaleX(0.950);">1</span><span class="t" style="left:1017.6px;top:383.2px;font-size:15px;line-height:15px;color:#f0f0f0;transform:scaleX(0.950);">0</span><span class="t" style="left:1012.8px;top:426.1px;font-size:15px;line-height:15px;color:#f0f0f0;transform:scaleX(0.950);">-1</span><span class="t" style="left:1012.8px;top:468.9px;font-size:15px;line-height:15px;color:#f0f0f0;transform:scaleX(0.950);">-2</span><span class="t" style="left:1012.8px;top:511.8px;font-size:15px;line-height:15px;color:#f0f0f0;transform:scaleX(0.950);">-3</span><span class="t" style="left:1012.8px;top:554.6px;font-size:15px;line-height:15px;color:#f0f0f0;transform:scaleX(0.950);">-4</span><div style="left:606.4px;top:574.6px;width:600.8px;height:162px;background:#000;overflow:hidden"><div style="left:17.6px;top:5.8px;width:59.5px;height:119.3px;background:linear-gradient(#fbfffb 50%,#ffffff 50%);border:1.3px solid rgba(255,255,255,.82)"></div><span class="t" style="left:29.8px;top:129.0px;font-size:13px;line-height:13px;color:#f4f4f4;transform:scaleX(1.053);">White</span><div style="left:86.65px;top:5.8px;width:59.5px;height:119.3px;background:linear-gradient(#e3e8e3 50%,#e6e6e6 50%);border:1.3px solid rgba(255,255,255,.82)"></div><span class="t" style="left:94.3px;top:129.0px;font-size:13px;line-height:13px;color:#f4f4f4;transform:scaleX(0.951);">Gray 80</span><div style="left:155.7px;top:5.8px;width:59.5px;height:119.3px;background:linear-gradient(#d0d3d0 50%,#d1d1d1 50%);border:1.3px solid rgba(255,255,255,.82)"></div><span class="t" style="left:163.7px;top:129.0px;font-size:13px;line-height:13px;color:#f4f4f4;transform:scaleX(0.941);">Gray 65</span><div style="left:224.75px;top:5.8px;width:59.5px;height:119.3px;background:linear-gradient(#b5b9b5 50%,#bababa 50%);border:1.3px solid rgba(255,255,255,.82)"></div><span class="t" style="left:232.4px;top:129.0px;font-size:13px;line-height:13px;color:#f4f4f4;transform:scaleX(0.951);">Gray 50</span><div style="left:293.8px;top:5.8px;width:59.5px;height:119.3px;background:linear-gradient(#999d99 50%,#9e9e9e 50%);border:1.3px solid rgba(255,255,255,.82)"></div><span class="t" style="left:301.8px;top:129.0px;font-size:13px;line-height:13px;color:#f4f4f4;transform:scaleX(0.941);">Gray 35</span><div style="left:362.85px;top:5.8px;width:59.5px;height:119.3px;background:linear-gradient(#060606 50%,#000000 50%);border:1.3px solid rgba(255,255,255,.82)"></div><span class="t" style="left:377.6px;top:129.0px;font-size:13px;line-height:13px;color:#f4f4f4;transform:scaleX(0.944);">Black</span><div style="left:431.9px;top:5.8px;width:59.5px;height:119.3px;background:linear-gradient(#735244 50%,#735244 50%);border:1.3px solid rgba(255,255,255,.82)"></div><span class="t" style="left:435.3px;top:129.0px;font-size:13px;line-height:13px;color:#f4f4f4;transform:scaleX(0.932);">Dark Skin</span><div style="left:500.95px;top:5.8px;width:59.5px;height:119.3px;background:linear-gradient(#c39683 50%,#c29682 50%);border:1.3px solid rgba(255,255,255,.82)"></div><span class="t" style="left:504.1px;top:129.0px;font-size:13px;line-height:13px;color:#f4f4f4;transform:scaleX(0.928);">Light Skin</span><div style="left:570px;top:5.8px;width:59.5px;height:119.3px;background:linear-gradient(#5f7b9e 50%,#627a9d 50%);border:1.3px solid rgba(255,255,255,.82)"></div><span class="t" style="left:576.0px;top:129.0px;font-size:13px;line-height:13px;color:#f4f4f4;transform:scaleX(0.936);">Blue Sky</span><span class="t" style="left:4.1px;top:50.9px;font-size:13px;line-height:13px;color:#f4f4f4;transform-origin:0 0;transform:rotate(-90deg) scaleX(.93)">Actual</span><span class="t" style="left:4.1px;top:117.4px;font-size:13px;line-height:13px;color:#f4f4f4;transform-origin:0 0;transform:rotate(-90deg) scaleX(.93)">Target</span></div><div style="left:606.4px;top:736.6px;width:600.8px;height:16.8px;background:#636363"></div><div style="left:607px;top:738px;width:15px;height:14.5px;background:#8a8a8a;border-radius:3px"></div><svg style="left:607px;top:738px" width="15" height="15"><path d="M10 3v9l-6-4.5z" fill="#2a2a2a"/></svg><div style="left:1191.6px;top:738px;width:15px;height:14.5px;background:#8a8a8a;border-radius:3px"></div><svg style="left:1191.6px;top:738px" width="15" height="15"><path d="M5 3v9l6-4.5z" fill="#2a2a2a"/></svg><div style="left:624px;top:738.3px;width:161.5px;height:14px;background:#4a4a4a;border-radius:7px"></div><div style="left:1214.4px;top:187.8px;width:706px;height:566px;background:#333;border:6px solid #1c1c1c;border-right-width:8px"></div><svg style="left:1214px;top:188px" width="706" height="566" viewBox="1214 188 706 566"><defs><linearGradient id="c0" gradientUnits="userSpaceOnUse" x1="1280" x2="1368"><stop offset="0" stop-color="#0f0"/><stop offset="1" stop-color="#0f0"/></linearGradient><linearGradient id="c1" gradientUnits="userSpaceOnUse" x1="1270" x2="1410"><stop offset="0" stop-color="#0f0"/><stop offset="0.857" stop-color="#0f0"/><stop offset="1" stop-color="#2cff00"/></linearGradient><linearGradient id="c2" gradientUnits="userSpaceOnUse" x1="1264" x2="1447"><stop offset="0" stop-color="#0f0"/><stop offset="0.694" stop-color="#0f0"/><stop offset="0.847" stop-color="#41ff00"/><stop offset="1" stop-color="#8dff00"/></linearGradient><linearGradient id="c3" gradientUnits="userSpaceOnUse" x1="1261" x2="1482"><stop offset="0" stop-color="#0f0"/><stop offset="0.593" stop-color="#0f0"/><stop offset="0.805" stop-color="#76ff00"/><stop offset="1" stop-color="#fffe00"/></linearGradient><linearGradient id="c4" gradientUnits="userSpaceOnUse" x1="1259" x2="1517"><stop offset="0" stop-color="#00ff04"/><stop offset="0.519" stop-color="#01ff00"/><stop offset="0.702" stop-color="#78ff00"/><stop offset="0.86" stop-color="#feff00"/><stop offset="0.926" stop-color="#ffcb00"/><stop offset="1" stop-color="#ffa100"/></linearGradient><linearGradient id="c5" gradientUnits="userSpaceOnUse" x1="1257" x2="1552"><stop offset="0" stop-color="#00ff0b"/><stop offset="0.461" stop-color="#0f0"/><stop offset="0.617" stop-color="#75ff00"/><stop offset="0.759" stop-color="#fffe00"/><stop offset="0.807" stop-color="#ffd100"/><stop offset="0.861" stop-color="#ffab00"/><stop offset="1" stop-color="#ff6c00"/></linearGradient><linearGradient id="c6" gradientUnits="userSpaceOnUse" x1="1256" x2="1587"><stop offset="0" stop-color="#0f1"/><stop offset="0.417" stop-color="#0f0"/><stop offset="0.556" stop-color="#78ff00"/><stop offset="0.677" stop-color="#fdff00"/><stop offset="0.737" stop-color="#ffc300"/><stop offset="0.807" stop-color="#ff9300"/><stop offset="0.894" stop-color="#ff6a00"/><stop offset="1" stop-color="#ff4a00"/></linearGradient><linearGradient id="c7" gradientUnits="userSpaceOnUse" x1="1256" x2="1622"><stop offset="0" stop-color="#00ff18"/><stop offset="0.38" stop-color="#01ff04"/><stop offset="0.503" stop-color="#7f0"/><stop offset="0.612" stop-color="#ff0"/><stop offset="0.678" stop-color="#ffb700"/><stop offset="0.76" stop-color="#ff8000"/><stop offset="0.866" stop-color="#ff5400"/><stop offset="1" stop-color="#ff3200"/></linearGradient><linearGradient id="c8" gradientUnits="userSpaceOnUse" x1="1255" x2="1656"><stop offset="0" stop-color="#00ff1e"/><stop offset="0.349" stop-color="#00ff0d"/><stop offset="0.459" stop-color="#74ff05"/><stop offset="0.559" stop-color="#fcff00"/><stop offset="0.631" stop-color="#ffad00"/><stop offset="0.721" stop-color="#ff7100"/><stop offset="0.84" stop-color="#f40"/><stop offset="1" stop-color="#ff2100"/></linearGradient><linearGradient id="c9" gradientUnits="userSpaceOnUse" x1="1255" x2="1691"><stop offset="0" stop-color="#00ff25"/><stop offset="0.323" stop-color="#00ff16"/><stop offset="0.422" stop-color="#74ff0f"/><stop offset="0.516" stop-color="#fffc06"/><stop offset="0.548" stop-color="#ffce02"/><stop offset="0.587" stop-color="#ffa500"/><stop offset="0.683" stop-color="#ff6500"/><stop offset="0.817" stop-color="#ff3600"/><stop offset="1" stop-color="#ff1300"/></linearGradient><linearGradient id="c10" gradientUnits="userSpaceOnUse" x1="1255" x2="1726"><stop offset="0" stop-color="#00ff2c"/><stop offset="0.299" stop-color="#00ff1f"/><stop offset="0.391" stop-color="#73ff19"/><stop offset="0.476" stop-color="#ffff12"/><stop offset="0.51" stop-color="#ffca0b"/><stop offset="0.548" stop-color="#ff9f06"/><stop offset="0.594" stop-color="#ff7a02"/><stop offset="0.65" stop-color="#ff5b00"/><stop offset="0.794" stop-color="#ff2b00"/><stop offset="1" stop-color="#ff0900"/></linearGradient><linearGradient id="c11" gradientUnits="userSpaceOnUse" x1="1255" x2="1761"><stop offset="0" stop-color="#0f3"/><stop offset="0.281" stop-color="#00ff28"/><stop offset="0.364" stop-color="#73ff24"/><stop offset="0.443" stop-color="#fffd1e"/><stop offset="0.476" stop-color="#ffc515"/><stop offset="0.516" stop-color="#ff980e"/><stop offset="0.563" stop-color="#ff7208"/><stop offset="0.623" stop-color="#ff5102"/><stop offset="0.777" stop-color="#ff2100"/><stop offset="1" stop-color="#f00"/></linearGradient><linearGradient id="c12" gradientUnits="userSpaceOnUse" x1="1255" x2="1796"><stop offset="0" stop-color="#00ff3a"/><stop offset="0.264" stop-color="#00ff32"/><stop offset="0.34" stop-color="#72ff2f"/><stop offset="0.414" stop-color="#fffc2a"/><stop offset="0.447" stop-color="#ffc11e"/><stop offset="0.488" stop-color="#ff9015"/><stop offset="0.538" stop-color="#ff690d"/><stop offset="0.601" stop-color="#ff4706"/><stop offset="0.684" stop-color="#ff2b01"/><stop offset="0.786" stop-color="#ff1400"/><stop offset="0.928" stop-color="#f00"/><stop offset="1" stop-color="#f00"/></linearGradient><linearGradient id="c13" gradientUnits="userSpaceOnUse" x1="1255" x2="1831"><stop offset="0" stop-color="#00ff41"/><stop offset="0.248" stop-color="#00ff3c"/><stop offset="0.319" stop-color="#72ff3a"/><stop offset="0.387" stop-color="#fffe37"/><stop offset="0.422" stop-color="#ffbc27"/><stop offset="0.464" stop-color="#ff8a1b"/><stop offset="0.516" stop-color="#ff6012"/><stop offset="0.58" stop-color="#ff3f0a"/><stop offset="0.675" stop-color="#ff2103"/><stop offset="0.797" stop-color="#ff0900"/><stop offset="0.865" stop-color="#f00"/><stop offset="1" stop-color="#f00"/></linearGradient><linearGradient id="c14" gradientUnits="userSpaceOnUse" x1="1255" x2="1866"><stop offset="0" stop-color="#00ff48"/><stop offset="0.236" stop-color="#00ff46"/><stop offset="0.303" stop-color="#75ff45"/><stop offset="0.365" stop-color="#fffd43"/><stop offset="0.398" stop-color="#ffbb31"/><stop offset="0.44" stop-color="#ff8522"/><stop offset="0.494" stop-color="#ff5916"/><stop offset="0.561" stop-color="#ff380d"/><stop offset="0.668" stop-color="#ff1805"/><stop offset="0.809" stop-color="#f00"/><stop offset="1" stop-color="#f00"/></linearGradient><linearGradient id="c15" gradientUnits="userSpaceOnUse" x1="1255" x2="1901"><stop offset="0" stop-color="#00ff4f"/><stop offset="0.224" stop-color="#01ff50"/><stop offset="0.285" stop-color="#71ff51"/><stop offset="0.345" stop-color="#fffb50"/><stop offset="0.379" stop-color="#ffb43a"/><stop offset="0.421" stop-color="#ff7e29"/><stop offset="0.475" stop-color="#ff531b"/><stop offset="0.545" stop-color="#ff3110"/><stop offset="0.638" stop-color="#ff1608"/><stop offset="0.759" stop-color="#ff0001"/><stop offset="1" stop-color="#f00"/></linearGradient><linearGradient id="c16" gradientUnits="userSpaceOnUse" x1="1256" x2="1916"><stop offset="0" stop-color="#00ff57"/><stop offset="0.218" stop-color="#00ff5b"/><stop offset="0.279" stop-color="#74ff5d"/><stop offset="0.335" stop-color="#fffe5e"/><stop offset="0.368" stop-color="#ffb544"/><stop offset="0.411" stop-color="#ff7d30"/><stop offset="0.465" stop-color="#ff5121"/><stop offset="0.535" stop-color="#ff2f15"/><stop offset="0.623" stop-color="#ff140b"/><stop offset="0.735" stop-color="#ff0004"/><stop offset="1" stop-color="#f00"/></linearGradient><linearGradient id="c17" gradientUnits="userSpaceOnUse" x1="1256" x2="1916"><stop offset="0" stop-color="#00ff5e"/><stop offset="0.22" stop-color="#0f6"/><stop offset="0.279" stop-color="#74ff69"/><stop offset="0.335" stop-color="#fffc6c"/><stop offset="0.368" stop-color="#ffb34f"/><stop offset="0.411" stop-color="#ff7b38"/><stop offset="0.465" stop-color="#ff4f27"/><stop offset="0.535" stop-color="#ff2d19"/><stop offset="0.62" stop-color="#ff140f"/><stop offset="0.729" stop-color="#ff0007"/><stop offset="1" stop-color="#f00"/></linearGradient><linearGradient id="c18" gradientUnits="userSpaceOnUse" x1="1257" x2="1916"><stop offset="0" stop-color="#0f6"/><stop offset="0.22" stop-color="#01ff71"/><stop offset="0.279" stop-color="#77ff76"/><stop offset="0.332" stop-color="#ffff7b"/><stop offset="0.364" stop-color="#ffb65b"/><stop offset="0.407" stop-color="#ff7c41"/><stop offset="0.461" stop-color="#ff502e"/><stop offset="0.531" stop-color="#ff2d1e"/><stop offset="0.615" stop-color="#ff1413"/><stop offset="0.722" stop-color="#ff000a"/><stop offset="1" stop-color="#f00"/></linearGradient><linearGradient id="c19" gradientUnits="userSpaceOnUse" x1="1258" x2="1916"><stop offset="0" stop-color="#00ff6e"/><stop offset="0.219" stop-color="#00ff7c"/><stop offset="0.277" stop-color="#73ff83"/><stop offset="0.331" stop-color="#fffd89"/><stop offset="0.363" stop-color="#ffb566"/><stop offset="0.406" stop-color="#ff7b4a"/><stop offset="0.46" stop-color="#ff4e34"/><stop offset="0.53" stop-color="#ff2c23"/><stop offset="0.612" stop-color="#ff1317"/><stop offset="0.716" stop-color="#ff000e"/><stop offset="1" stop-color="#ff0001"/></linearGradient><linearGradient id="c20" gradientUnits="userSpaceOnUse" x1="1258" x2="1916"><stop offset="0" stop-color="#00ff76"/><stop offset="0.22" stop-color="#0f8"/><stop offset="0.277" stop-color="#72ff90"/><stop offset="0.331" stop-color="#fffc98"/><stop offset="0.363" stop-color="#ffb371"/><stop offset="0.406" stop-color="#ff7952"/><stop offset="0.46" stop-color="#ff4d3a"/><stop offset="0.53" stop-color="#ff2b28"/><stop offset="0.71" stop-color="#f01"/><stop offset="1" stop-color="#ff0003"/></linearGradient><linearGradient id="c21" gradientUnits="userSpaceOnUse" x1="1259" x2="1916"><stop offset="0" stop-color="#00ff7e"/><stop offset="0.221" stop-color="#01ff95"/><stop offset="0.277" stop-color="#76ff9e"/><stop offset="0.329" stop-color="#fffea9"/><stop offset="0.361" stop-color="#ffb47d"/><stop offset="0.403" stop-color="#ff795b"/><stop offset="0.457" stop-color="#ff4d41"/><stop offset="0.527" stop-color="#ff2b2d"/><stop offset="0.703" stop-color="#ff0015"/><stop offset="1" stop-color="#ff0004"/></linearGradient><linearGradient id="c22" gradientUnits="userSpaceOnUse" x1="1260" x2="1916"><stop offset="0" stop-color="#00ff86"/><stop offset="0.22" stop-color="#00ffa1"/><stop offset="0.274" stop-color="#72ffac"/><stop offset="0.328" stop-color="#fffdb8"/><stop offset="0.36" stop-color="#ffb289"/><stop offset="0.401" stop-color="#ff7964"/><stop offset="0.456" stop-color="#ff4b48"/><stop offset="0.526" stop-color="#ff2932"/><stop offset="0.698" stop-color="#ff0018"/><stop offset="1" stop-color="#ff0006"/></linearGradient><linearGradient id="c23" gradientUnits="userSpaceOnUse" x1="1261" x2="1916"><stop offset="0" stop-color="#00ff8f"/><stop offset="0.22" stop-color="#00ffae"/><stop offset="0.273" stop-color="#71ffba"/><stop offset="0.327" stop-color="#fffbc7"/><stop offset="0.359" stop-color="#ffb094"/><stop offset="0.4" stop-color="#ff776d"/><stop offset="0.455" stop-color="#ff4a4e"/><stop offset="0.525" stop-color="#ff2837"/><stop offset="0.692" stop-color="#ff001c"/><stop offset="1" stop-color="#ff0008"/></linearGradient><linearGradient id="c24" gradientUnits="userSpaceOnUse" x1="1262" x2="1916"><stop offset="0" stop-color="#00ff98"/><stop offset="0.22" stop-color="#01ffbb"/><stop offset="0.274" stop-color="#74ffca"/><stop offset="0.324" stop-color="#fffeda"/><stop offset="0.339" stop-color="#ffd4bb"/><stop offset="0.356" stop-color="#ffb1a2"/><stop offset="0.398" stop-color="#f77"/><stop offset="0.451" stop-color="#ff4a56"/><stop offset="0.521" stop-color="#ff283d"/><stop offset="0.685" stop-color="#ff0020"/><stop offset="1" stop-color="#ff000a"/></linearGradient><linearGradient id="c25" gradientUnits="userSpaceOnUse" x1="1263" x2="1916"><stop offset="0" stop-color="#00ffa1"/><stop offset="0.219" stop-color="#00ffc9"/><stop offset="0.271" stop-color="#70ffd9"/><stop offset="0.323" stop-color="#fffcea"/><stop offset="0.338" stop-color="#ffd2c9"/><stop offset="0.355" stop-color="#ffafad"/><stop offset="0.397" stop-color="#ff7580"/><stop offset="0.45" stop-color="#ff495d"/><stop offset="0.521" stop-color="#ff2642"/><stop offset="0.678" stop-color="#ff0024"/><stop offset="1" stop-color="#ff000c"/></linearGradient><linearGradient id="c26" gradientUnits="userSpaceOnUse" x1="1264" x2="1913"><stop offset="0" stop-color="#0fa"/><stop offset="0.22" stop-color="#00ffd7"/><stop offset="0.274" stop-color="#77ffea"/><stop offset="0.322" stop-color="#fff"/><stop offset="0.336" stop-color="#ffd7de"/><stop offset="0.353" stop-color="#ffb3be"/><stop offset="0.394" stop-color="#ff768c"/><stop offset="0.448" stop-color="#ff4965"/><stop offset="0.519" stop-color="#ff2648"/><stop offset="0.675" stop-color="#ff0028"/><stop offset="1" stop-color="#ff000e"/></linearGradient><linearGradient id="c27" gradientUnits="userSpaceOnUse" x1="1266" x2="1909"><stop offset="0" stop-color="#00ffb4"/><stop offset="0.219" stop-color="#00ffe5"/><stop offset="0.25" stop-color="#3ffff1"/><stop offset="0.285" stop-color="#93ffff"/><stop offset="0.328" stop-color="#ffeaff"/><stop offset="0.361" stop-color="#ffa3bf"/><stop offset="0.403" stop-color="#ff6c8e"/><stop offset="0.457" stop-color="#ff4368"/><stop offset="0.529" stop-color="#ff224b"/><stop offset="0.672" stop-color="#ff002c"/><stop offset="1" stop-color="#ff0010"/></linearGradient><linearGradient id="c28" gradientUnits="userSpaceOnUse" x1="1267" x2="1905"><stop offset="0" stop-color="#00ffbd"/><stop offset="0.122" stop-color="#00ffd6"/><stop offset="0.221" stop-color="#00fff5"/><stop offset="0.248" stop-color="#37ffff"/><stop offset="0.335" stop-color="#ffd7ff"/><stop offset="0.368" stop-color="#ff97c1"/><stop offset="0.412" stop-color="#ff638f"/><stop offset="0.469" stop-color="#ff3c6a"/><stop offset="0.541" stop-color="#ff1e4d"/><stop offset="0.669" stop-color="#ff0030"/><stop offset="1" stop-color="#ff0012"/></linearGradient><linearGradient id="c29" gradientUnits="userSpaceOnUse" x1="1268" x2="1901"><stop offset="0" stop-color="#00ffc7"/><stop offset="0.223" stop-color="#00faff"/><stop offset="0.284" stop-color="#7ee0ff"/><stop offset="0.343" stop-color="#ffc6ff"/><stop offset="0.378" stop-color="#ff89c1"/><stop offset="0.422" stop-color="#ff5a91"/><stop offset="0.479" stop-color="#ff366c"/><stop offset="0.551" stop-color="#ff1a4f"/><stop offset="0.667" stop-color="#ff0035"/><stop offset="1" stop-color="#ff0015"/></linearGradient><linearGradient id="c30" gradientUnits="userSpaceOnUse" x1="1269" x2="1897"><stop offset="0" stop-color="#00ffd1"/><stop offset="0.17" stop-color="#0ff"/><stop offset="0.223" stop-color="#00ecff"/><stop offset="0.283" stop-color="#73d4ff"/><stop offset="0.35" stop-color="#ffb6ff"/><stop offset="0.385" stop-color="#ff7fc3"/><stop offset="0.432" stop-color="#ff5293"/><stop offset="0.489" stop-color="#ff316e"/><stop offset="0.564" stop-color="#ff1651"/><stop offset="0.664" stop-color="#ff003a"/><stop offset="1" stop-color="#ff0017"/></linearGradient><linearGradient id="c31" gradientUnits="userSpaceOnUse" x1="1271" x2="1893"><stop offset="0" stop-color="#00ffdc"/><stop offset="0.13" stop-color="#0ff"/><stop offset="0.223" stop-color="#00deff"/><stop offset="0.291" stop-color="#7bc4ff"/><stop offset="0.357" stop-color="#ffa8ff"/><stop offset="0.391" stop-color="#ff77c7"/><stop offset="0.431" stop-color="#ff529c"/><stop offset="0.482" stop-color="#ff3379"/><stop offset="0.545" stop-color="#ff1b5d"/><stop offset="0.661" stop-color="#ff003e"/><stop offset="0.805" stop-color="#ff0029"/><stop offset="1" stop-color="#ff0019"/></linearGradient><linearGradient id="c32" gradientUnits="userSpaceOnUse" x1="1272" x2="1889"><stop offset="0" stop-color="#00ffe6"/><stop offset="0.091" stop-color="#0ff"/><stop offset="0.225" stop-color="#01d2ff"/><stop offset="0.297" stop-color="#7db7ff"/><stop offset="0.365" stop-color="#ff9bff"/><stop offset="0.399" stop-color="#ff6ec9"/><stop offset="0.439" stop-color="#ff4b9f"/><stop offset="0.491" stop-color="#ff2e7c"/><stop offset="0.554" stop-color="#ff1760"/><stop offset="0.658" stop-color="#ff0043"/><stop offset="0.804" stop-color="#ff002d"/><stop offset="1" stop-color="#ff001c"/></linearGradient><linearGradient id="c33" gradientUnits="userSpaceOnUse" x1="1274" x2="1885"><stop offset="0" stop-color="#00fff2"/><stop offset="0.049" stop-color="#0ff"/><stop offset="0.224" stop-color="#00c7ff"/><stop offset="0.373" stop-color="#ff8cfc"/><stop offset="0.408" stop-color="#ff64c9"/><stop offset="0.45" stop-color="#ff439f"/><stop offset="0.501" stop-color="#ff297d"/><stop offset="0.565" stop-color="#ff1462"/><stop offset="0.656" stop-color="#ff0048"/><stop offset="0.804" stop-color="#ff0030"/><stop offset="1" stop-color="#ff001e"/></linearGradient><linearGradient id="c34" gradientUnits="userSpaceOnUse" x1="1275" x2="1881"><stop offset="0" stop-color="#00fffd"/><stop offset="0.226" stop-color="#00bcff"/><stop offset="0.381" stop-color="#ff81fd"/><stop offset="0.416" stop-color="#ff5cca"/><stop offset="0.457" stop-color="#ff3ea2"/><stop offset="0.508" stop-color="#ff2681"/><stop offset="0.573" stop-color="#ff1165"/><stop offset="0.653" stop-color="#ff004d"/><stop offset="0.802" stop-color="#ff0034"/><stop offset="1" stop-color="#ff0021"/></linearGradient><linearGradient id="c35" gradientUnits="userSpaceOnUse" x1="1277" x2="1877"><stop offset="0" stop-color="#00f6ff"/><stop offset="0.227" stop-color="#01b2ff"/><stop offset="0.388" stop-color="#ff76fd"/><stop offset="0.423" stop-color="#ff54cc"/><stop offset="0.465" stop-color="#ff39a4"/><stop offset="0.517" stop-color="#ff2283"/><stop offset="0.58" stop-color="#ff0e68"/><stop offset="0.65" stop-color="#ff0053"/><stop offset="0.75" stop-color="#ff003f"/><stop offset="1" stop-color="#ff0023"/></linearGradient><linearGradient id="c36" gradientUnits="userSpaceOnUse" x1="1278" x2="1874"><stop offset="0" stop-color="#00ebff"/><stop offset="0.227" stop-color="#00a9ff"/><stop offset="0.396" stop-color="#ff6dfd"/><stop offset="0.431" stop-color="#ff4dcd"/><stop offset="0.475" stop-color="#ff33a5"/><stop offset="0.527" stop-color="#ff1d85"/><stop offset="0.589" stop-color="#ff0b6a"/><stop offset="0.646" stop-color="#ff0059"/><stop offset="0.757" stop-color="#ff0041"/><stop offset="1" stop-color="#ff0026"/></linearGradient><linearGradient id="c37" gradientUnits="userSpaceOnUse" x1="1280" x2="1870"><stop offset="0" stop-color="#00e1ff"/><stop offset="0.227" stop-color="#00a0ff"/><stop offset="0.403" stop-color="#ff64fd"/><stop offset="0.439" stop-color="#ff46cf"/><stop offset="0.483" stop-color="#ff2ea7"/><stop offset="0.534" stop-color="#ff1a88"/><stop offset="0.597" stop-color="#ff096d"/><stop offset="0.642" stop-color="#ff005f"/><stop offset="0.761" stop-color="#ff0045"/><stop offset="1" stop-color="#ff0029"/></linearGradient><linearGradient id="c38" gradientUnits="userSpaceOnUse" x1="1281" x2="1866"><stop offset="0" stop-color="#00d8ff"/><stop offset="0.229" stop-color="#0198ff"/><stop offset="0.412" stop-color="#ff5bfd"/><stop offset="0.448" stop-color="#ff40d0"/><stop offset="0.491" stop-color="#ff2aab"/><stop offset="0.542" stop-color="#ff178b"/><stop offset="0.605" stop-color="#ff0770"/><stop offset="0.639" stop-color="#ff0065"/><stop offset="0.768" stop-color="#ff0048"/><stop offset="1" stop-color="#ff002b"/></linearGradient><linearGradient id="c39" gradientUnits="userSpaceOnUse" x1="1283" x2="1862"><stop offset="0" stop-color="#00ceff"/><stop offset="0.228" stop-color="#0091ff"/><stop offset="0.42" stop-color="#ff53fd"/><stop offset="0.456" stop-color="#ff3ad1"/><stop offset="0.499" stop-color="#ff25ac"/><stop offset="0.551" stop-color="#ff138d"/><stop offset="0.613" stop-color="#ff0473"/><stop offset="0.774" stop-color="#ff004a"/><stop offset="1" stop-color="#ff002e"/></linearGradient><linearGradient id="c40" gradientUnits="userSpaceOnUse" x1="1284" x2="1858"><stop offset="0" stop-color="#00c6ff"/><stop offset="0.23" stop-color="#008aff"/><stop offset="0.429" stop-color="#ff4bfd"/><stop offset="0.465" stop-color="#ff34d3"/><stop offset="0.509" stop-color="#ff21ae"/><stop offset="0.62" stop-color="#ff0276"/><stop offset="0.779" stop-color="#ff004e"/><stop offset="1" stop-color="#ff0031"/></linearGradient><linearGradient id="c41" gradientUnits="userSpaceOnUse" x1="1286" x2="1854"><stop offset="0" stop-color="#00beff"/><stop offset="0.231" stop-color="#0183ff"/><stop offset="0.437" stop-color="#ff44fe"/><stop offset="0.474" stop-color="#ff2fd4"/><stop offset="0.518" stop-color="#ff1cb0"/><stop offset="0.629" stop-color="#ff0079"/><stop offset="0.783" stop-color="#ff0051"/><stop offset="1" stop-color="#ff0034"/></linearGradient><linearGradient id="c42" gradientUnits="userSpaceOnUse" x1="1288" x2="1850"><stop offset="0" stop-color="#00b6ff"/><stop offset="0.23" stop-color="#007dff"/><stop offset="0.329" stop-color="#7161ff"/><stop offset="0.445" stop-color="#ff3efe"/><stop offset="0.482" stop-color="#ff2ad5"/><stop offset="0.525" stop-color="#ff19b3"/><stop offset="0.637" stop-color="#ff007b"/><stop offset="0.79" stop-color="#ff0054"/><stop offset="1" stop-color="#ff0037"/></linearGradient><linearGradient id="c43" gradientUnits="userSpaceOnUse" x1="1289" x2="1846"><stop offset="0" stop-color="#00afff"/><stop offset="0.232" stop-color="#07f"/><stop offset="0.454" stop-color="#ff37fe"/><stop offset="0.492" stop-color="#ff25d6"/><stop offset="0.535" stop-color="#ff15b4"/><stop offset="0.645" stop-color="#ff007f"/><stop offset="0.795" stop-color="#ff0057"/><stop offset="1" stop-color="#ff003a"/></linearGradient><linearGradient id="c44" gradientUnits="userSpaceOnUse" x1="1291" x2="1842"><stop offset="0" stop-color="#00a8ff"/><stop offset="0.232" stop-color="#0171ff"/><stop offset="0.463" stop-color="#ff31fe"/><stop offset="0.501" stop-color="#ff20d7"/><stop offset="0.544" stop-color="#ff11b6"/><stop offset="0.617" stop-color="#ff008f"/><stop offset="0.653" stop-color="#ff0081"/><stop offset="0.8" stop-color="#ff005a"/><stop offset="1" stop-color="#ff003d"/></linearGradient><linearGradient id="c45" gradientUnits="userSpaceOnUse" x1="1293" x2="1838"><stop offset="0" stop-color="#00a1ff"/><stop offset="0.231" stop-color="#006cff"/><stop offset="0.345" stop-color="#744fff"/><stop offset="0.472" stop-color="#ff2bfe"/><stop offset="0.508" stop-color="#ff1cd9"/><stop offset="0.552" stop-color="#ff0eb8"/><stop offset="0.613" stop-color="#ff0098"/><stop offset="0.661" stop-color="#ff0084"/><stop offset="0.806" stop-color="#ff005d"/><stop offset="1" stop-color="#ff0040"/></linearGradient><linearGradient id="c46" gradientUnits="userSpaceOnUse" x1="1295" x2="1834"><stop offset="0" stop-color="#009bff"/><stop offset="0.232" stop-color="#0067ff"/><stop offset="0.481" stop-color="#ff26fe"/><stop offset="0.562" stop-color="#ff0aba"/><stop offset="0.609" stop-color="#ff00a0"/><stop offset="0.67" stop-color="#ff0087"/><stop offset="0.813" stop-color="#ff0060"/><stop offset="1" stop-color="#ff0043"/></linearGradient><linearGradient id="c47" gradientUnits="userSpaceOnUse" x1="1296" x2="1831"><stop offset="0" stop-color="#0095ff"/><stop offset="0.234" stop-color="#0162ff"/><stop offset="0.49" stop-color="#ff21fe"/><stop offset="0.57" stop-color="#ff07bc"/><stop offset="0.677" stop-color="#ff008a"/><stop offset="0.817" stop-color="#ff0063"/><stop offset="1" stop-color="#ff0046"/></linearGradient><linearGradient id="c48" gradientUnits="userSpaceOnUse" x1="1298" x2="1827"><stop offset="0" stop-color="#008fff"/><stop offset="0.233" stop-color="#005eff"/><stop offset="0.361" stop-color="#763fff"/><stop offset="0.499" stop-color="#ff1cfe"/><stop offset="0.58" stop-color="#ff04be"/><stop offset="0.684" stop-color="#ff008d"/><stop offset="0.82" stop-color="#ff0067"/><stop offset="1" stop-color="#ff004a"/></linearGradient><linearGradient id="c49" gradientUnits="userSpaceOnUse" x1="1300" x2="1823"><stop offset="0" stop-color="#0089ff"/><stop offset="0.233" stop-color="#0059ff"/><stop offset="0.509" stop-color="#ff17fe"/><stop offset="0.589" stop-color="#ff01c0"/><stop offset="0.692" stop-color="#ff0090"/><stop offset="0.826" stop-color="#ff006a"/><stop offset="1" stop-color="#ff004d"/></linearGradient><linearGradient id="c50" gradientUnits="userSpaceOnUse" x1="1302" x2="1819"><stop offset="0" stop-color="#0084ff"/><stop offset="0.234" stop-color="#0155ff"/><stop offset="0.518" stop-color="#ff13fe"/><stop offset="0.598" stop-color="#ff00c2"/><stop offset="0.7" stop-color="#ff0093"/><stop offset="0.832" stop-color="#ff006e"/><stop offset="1" stop-color="#ff0051"/></linearGradient><linearGradient id="c51" gradientUnits="userSpaceOnUse" x1="1304" x2="1815"><stop offset="0" stop-color="#007fff"/><stop offset="0.233" stop-color="#0051ff"/><stop offset="0.378" stop-color="#7832ff"/><stop offset="0.528" stop-color="#ff0efe"/><stop offset="0.609" stop-color="#ff00c3"/><stop offset="0.708" stop-color="#ff0096"/><stop offset="0.838" stop-color="#ff0071"/><stop offset="1" stop-color="#ff0054"/></linearGradient><linearGradient id="c52" gradientUnits="userSpaceOnUse" x1="1306" x2="1811"><stop offset="0" stop-color="#007aff"/><stop offset="0.234" stop-color="#004dff"/><stop offset="0.386" stop-color="#7b2dff"/><stop offset="0.539" stop-color="#ff0afe"/><stop offset="0.618" stop-color="#ff00c5"/><stop offset="0.717" stop-color="#f09"/><stop offset="0.842" stop-color="#ff0075"/><stop offset="1" stop-color="#ff0058"/></linearGradient><linearGradient id="c53" gradientUnits="userSpaceOnUse" x1="1308" x2="1807"><stop offset="0" stop-color="#0075ff"/><stop offset="0.234" stop-color="#014aff"/><stop offset="0.391" stop-color="#7a2aff"/><stop offset="0.549" stop-color="#ff06ff"/><stop offset="0.627" stop-color="#ff00c8"/><stop offset="0.725" stop-color="#ff009b"/><stop offset="0.848" stop-color="#ff0078"/><stop offset="1" stop-color="#ff005c"/></linearGradient><linearGradient id="c54" gradientUnits="userSpaceOnUse" x1="1310" x2="1803"><stop offset="0" stop-color="#0070ff"/><stop offset="0.233" stop-color="#0046ff"/><stop offset="0.396" stop-color="#7926ff"/><stop offset="0.56" stop-color="#ff03ff"/><stop offset="0.637" stop-color="#ff00ca"/><stop offset="0.734" stop-color="#ff009e"/><stop offset="0.854" stop-color="#ff007b"/><stop offset="1" stop-color="#ff0060"/></linearGradient><linearGradient id="c55" gradientUnits="userSpaceOnUse" x1="1312" x2="1799"><stop offset="0" stop-color="#006cff"/><stop offset="0.234" stop-color="#0043ff"/><stop offset="0.402" stop-color="#7b22ff"/><stop offset="0.571" stop-color="#f0f"/><stop offset="0.647" stop-color="#f0c"/><stop offset="0.741" stop-color="#ff00a2"/><stop offset="0.858" stop-color="#ff007f"/><stop offset="1" stop-color="#ff0064"/></linearGradient><linearGradient id="c56" gradientUnits="userSpaceOnUse" x1="1314" x2="1795"><stop offset="0" stop-color="#0068ff"/><stop offset="0.235" stop-color="#013fff"/><stop offset="0.41" stop-color="#7c1fff"/><stop offset="0.582" stop-color="#f0f"/><stop offset="0.659" stop-color="#ff00cd"/><stop offset="0.751" stop-color="#ff00a4"/><stop offset="0.863" stop-color="#ff0083"/><stop offset="1" stop-color="#ff0068"/></linearGradient><linearGradient id="c57" gradientUnits="userSpaceOnUse" x1="1316" x2="1792"><stop offset="0" stop-color="#0063ff"/><stop offset="0.233" stop-color="#003dff"/><stop offset="0.555" stop-color="#e200ff"/><stop offset="0.592" stop-color="#f0f"/><stop offset="0.668" stop-color="#ff00cf"/><stop offset="0.758" stop-color="#ff00a7"/><stop offset="0.868" stop-color="#ff0087"/><stop offset="1" stop-color="#ff006c"/></linearGradient><linearGradient id="c58" gradientUnits="userSpaceOnUse" x1="1318" x2="1788"><stop offset="0" stop-color="#005fff"/><stop offset="0.234" stop-color="#003aff"/><stop offset="0.549" stop-color="#d600ff"/><stop offset="0.604" stop-color="#f0f"/><stop offset="0.679" stop-color="#ff00d0"/><stop offset="0.766" stop-color="#ff00ab"/><stop offset="0.872" stop-color="#ff008b"/><stop offset="1" stop-color="#ff0070"/></linearGradient><linearGradient id="c59" gradientUnits="userSpaceOnUse" x1="1320" x2="1784"><stop offset="0" stop-color="#005cff"/><stop offset="0.235" stop-color="#0137ff"/><stop offset="0.543" stop-color="#cb00ff"/><stop offset="0.616" stop-color="#f0f"/><stop offset="0.69" stop-color="#ff00d2"/><stop offset="0.776" stop-color="#ff00ad"/><stop offset="1" stop-color="#ff0074"/></linearGradient><linearGradient id="c60" gradientUnits="userSpaceOnUse" x1="1323" x2="1780"><stop offset="0" stop-color="#0058ff"/><stop offset="0.232" stop-color="#0034ff"/><stop offset="0.536" stop-color="#c000ff"/><stop offset="0.628" stop-color="#f0f"/><stop offset="0.7" stop-color="#ff00d4"/><stop offset="0.783" stop-color="#ff00b1"/><stop offset="1" stop-color="#ff0079"/></linearGradient><linearGradient id="c61" gradientUnits="userSpaceOnUse" x1="1325" x2="1776"><stop offset="0" stop-color="#0054ff"/><stop offset="0.233" stop-color="#0031ff"/><stop offset="0.53" stop-color="#b600ff"/><stop offset="0.641" stop-color="#f0f"/><stop offset="0.71" stop-color="#ff00d7"/><stop offset="0.792" stop-color="#ff00b4"/><stop offset="1" stop-color="#ff007d"/></linearGradient><linearGradient id="c62" gradientUnits="userSpaceOnUse" x1="1327" x2="1772"><stop offset="0" stop-color="#0051ff"/><stop offset="0.231" stop-color="#002fff"/><stop offset="0.524" stop-color="#ac00ff"/><stop offset="0.654" stop-color="#f0f"/><stop offset="0.724" stop-color="#ff00d8"/><stop offset="0.802" stop-color="#ff00b7"/><stop offset="1" stop-color="#ff0082"/></linearGradient><linearGradient id="c63" gradientUnits="userSpaceOnUse" x1="1329" x2="1768"><stop offset="0" stop-color="#004dff"/><stop offset="0.232" stop-color="#002cff"/><stop offset="0.517" stop-color="#a200ff"/><stop offset="0.667" stop-color="#f0f"/><stop offset="0.811" stop-color="#ff00ba"/><stop offset="1" stop-color="#ff0087"/></linearGradient><linearGradient id="c64" gradientUnits="userSpaceOnUse" x1="1331" x2="1764"><stop offset="0" stop-color="#004aff"/><stop offset="0.233" stop-color="#002aff"/><stop offset="0.51" stop-color="#90f"/><stop offset="0.681" stop-color="#f0f"/><stop offset="0.82" stop-color="#ff00be"/><stop offset="1" stop-color="#ff008c"/></linearGradient><linearGradient id="c65" gradientUnits="userSpaceOnUse" x1="1334" x2="1760"><stop offset="0" stop-color="#0047ff"/><stop offset="0.23" stop-color="#0028ff"/><stop offset="0.505" stop-color="#9100ff"/><stop offset="0.695" stop-color="#f0f"/><stop offset="0.829" stop-color="#ff00c1"/><stop offset="1" stop-color="#ff0091"/></linearGradient><linearGradient id="c66" gradientUnits="userSpaceOnUse" x1="1336" x2="1756"><stop offset="0" stop-color="#04f"/><stop offset="0.231" stop-color="#0026ff"/><stop offset="0.498" stop-color="#8900ff"/><stop offset="0.71" stop-color="#f0f"/><stop offset="0.838" stop-color="#ff00c4"/><stop offset="1" stop-color="#ff0096"/></linearGradient><linearGradient id="c67" gradientUnits="userSpaceOnUse" x1="1338" x2="1752"><stop offset="0" stop-color="#0041ff"/><stop offset="0.232" stop-color="#0123ff"/><stop offset="0.49" stop-color="#8100ff"/><stop offset="0.725" stop-color="#f0f"/><stop offset="0.848" stop-color="#ff00c8"/><stop offset="1" stop-color="#ff009c"/></linearGradient><linearGradient id="c68" gradientUnits="userSpaceOnUse" x1="1341" x2="1749"><stop offset="0" stop-color="#003eff"/><stop offset="0.228" stop-color="#0021ff"/><stop offset="0.48" stop-color="#7900ff"/><stop offset="0.738" stop-color="#f0f"/><stop offset="0.855" stop-color="#ff00cb"/><stop offset="1" stop-color="#ff00a1"/></linearGradient><linearGradient id="c69" gradientUnits="userSpaceOnUse" x1="1343" x2="1745"><stop offset="0" stop-color="#003bff"/><stop offset="0.229" stop-color="#001fff"/><stop offset="0.473" stop-color="#7100ff"/><stop offset="0.754" stop-color="#f0f"/><stop offset="0.866" stop-color="#ff00cf"/><stop offset="1" stop-color="#ff00a7"/></linearGradient><linearGradient id="c70" gradientUnits="userSpaceOnUse" x1="1346" x2="1741"><stop offset="0" stop-color="#0038ff"/><stop offset="0.228" stop-color="#011dff"/><stop offset="0.463" stop-color="#6a00ff"/><stop offset="0.77" stop-color="#f0f"/><stop offset="0.876" stop-color="#ff00d2"/><stop offset="1" stop-color="#ff00ad"/></linearGradient><linearGradient id="c71" gradientUnits="userSpaceOnUse" x1="1348" x2="1737"><stop offset="0" stop-color="#0035ff"/><stop offset="0.226" stop-color="#001cff"/><stop offset="0.455" stop-color="#6300ff"/><stop offset="0.787" stop-color="#f0f"/><stop offset="0.887" stop-color="#ff00d5"/><stop offset="1" stop-color="#ff00b3"/></linearGradient><linearGradient id="c72" gradientUnits="userSpaceOnUse" x1="1350" x2="1733"><stop offset="0" stop-color="#03f"/><stop offset="0.227" stop-color="#001aff"/><stop offset="0.446" stop-color="#5c00ff"/><stop offset="0.804" stop-color="#f0f"/><stop offset="1" stop-color="#ff00b9"/></linearGradient><linearGradient id="c73" gradientUnits="userSpaceOnUse" x1="1353" x2="1729"><stop offset="0" stop-color="#0030ff"/><stop offset="0.226" stop-color="#0118ff"/><stop offset="0.436" stop-color="#50f"/><stop offset="0.822" stop-color="#f0f"/><stop offset="1" stop-color="#ff00c0"/></linearGradient><linearGradient id="c74" gradientUnits="userSpaceOnUse" x1="1355" x2="1725"><stop offset="0" stop-color="#002eff"/><stop offset="0.224" stop-color="#0016ff"/><stop offset="0.427" stop-color="#4f00ff"/><stop offset="0.841" stop-color="#f0f"/><stop offset="1" stop-color="#ff00c6"/></linearGradient><linearGradient id="c75" gradientUnits="userSpaceOnUse" x1="1358" x2="1721"><stop offset="0" stop-color="#002bff"/><stop offset="0.223" stop-color="#0015ff"/><stop offset="0.419" stop-color="#4a00ff"/><stop offset="0.86" stop-color="#f0f"/><stop offset="1" stop-color="#ff00cd"/></linearGradient><linearGradient id="c76" gradientUnits="userSpaceOnUse" x1="1360" x2="1717"><stop offset="0" stop-color="#0029ff"/><stop offset="0.224" stop-color="#0113ff"/><stop offset="0.409" stop-color="#40f"/><stop offset="0.88" stop-color="#fe00ff"/><stop offset="1" stop-color="#ff00d4"/></linearGradient><linearGradient id="c77" gradientUnits="userSpaceOnUse" x1="1363" x2="1713"><stop offset="0" stop-color="#0026ff"/><stop offset="0.22" stop-color="#01f"/><stop offset="0.397" stop-color="#3e00ff"/><stop offset="0.9" stop-color="#fe00ff"/><stop offset="1" stop-color="#ff00dc"/></linearGradient><linearGradient id="c78" gradientUnits="userSpaceOnUse" x1="1365" x2="1710"><stop offset="0" stop-color="#0024ff"/><stop offset="0.22" stop-color="#0010ff"/><stop offset="0.386" stop-color="#3900ff"/><stop offset="0.919" stop-color="#fe00ff"/><stop offset="1" stop-color="#ff00e3"/></linearGradient><linearGradient id="c79" gradientUnits="userSpaceOnUse" x1="1368" x2="1706"><stop offset="0" stop-color="#02f"/><stop offset="0.219" stop-color="#010eff"/><stop offset="0.373" stop-color="#30f"/><stop offset="0.941" stop-color="#fe00ff"/><stop offset="1" stop-color="#ff00eb"/></linearGradient><linearGradient id="c80" gradientUnits="userSpaceOnUse" x1="1370" x2="1702"><stop offset="0" stop-color="#0020ff"/><stop offset="0.217" stop-color="#000dff"/><stop offset="0.361" stop-color="#2e00ff"/><stop offset="0.964" stop-color="#fe00ff"/><stop offset="1" stop-color="#ff00f3"/></linearGradient><linearGradient id="c81" gradientUnits="userSpaceOnUse" x1="1373" x2="1698"><stop offset="0" stop-color="#001eff"/><stop offset="0.215" stop-color="#000bff"/><stop offset="0.348" stop-color="#2900ff"/><stop offset="1" stop-color="#ff00fb"/></linearGradient><linearGradient id="c82" gradientUnits="userSpaceOnUse" x1="1376" x2="1694"><stop offset="0" stop-color="#001bff"/><stop offset="0.214" stop-color="#010aff"/><stop offset="0.333" stop-color="#2400ff"/><stop offset="1" stop-color="#fa00ff"/></linearGradient><linearGradient id="c83" gradientUnits="userSpaceOnUse" x1="1378" x2="1690"><stop offset="0" stop-color="#001aff"/><stop offset="0.212" stop-color="#0009ff"/><stop offset="0.321" stop-color="#1f00ff"/><stop offset="1" stop-color="#f200ff"/></linearGradient><linearGradient id="c84" gradientUnits="userSpaceOnUse" x1="1381" x2="1686"><stop offset="0" stop-color="#0018ff"/><stop offset="0.21" stop-color="#0007ff"/><stop offset="0.305" stop-color="#1b00ff"/><stop offset="1" stop-color="#e900ff"/></linearGradient><linearGradient id="c85" gradientUnits="userSpaceOnUse" x1="1384" x2="1682"><stop offset="0" stop-color="#0016ff"/><stop offset="0.208" stop-color="#0106ff"/><stop offset="0.289" stop-color="#1600ff"/><stop offset="1" stop-color="#e100ff"/></linearGradient><linearGradient id="c86" gradientUnits="userSpaceOnUse" x1="1386" x2="1678"><stop offset="0" stop-color="#0014ff"/><stop offset="0.205" stop-color="#0005ff"/><stop offset="1" stop-color="#da00ff"/></linearGradient><linearGradient id="c87" gradientUnits="userSpaceOnUse" x1="1389" x2="1674"><stop offset="0" stop-color="#0012ff"/><stop offset="0.204" stop-color="#0004ff"/><stop offset="1" stop-color="#d200ff"/></linearGradient><linearGradient id="c88" gradientUnits="userSpaceOnUse" x1="1392" x2="1671"><stop offset="0" stop-color="#0010ff"/><stop offset="0.201" stop-color="#0103ff"/><stop offset="1" stop-color="#c0f"/></linearGradient><linearGradient id="c89" gradientUnits="userSpaceOnUse" x1="1395" x2="1667"><stop offset="0" stop-color="#000eff"/><stop offset="0.195" stop-color="#0002ff"/><stop offset="1" stop-color="#c500ff"/></linearGradient><linearGradient id="c90" gradientUnits="userSpaceOnUse" x1="1398" x2="1663"><stop offset="0" stop-color="#000cff"/><stop offset="0.192" stop-color="#00f"/><stop offset="1" stop-color="#be00ff"/></linearGradient><linearGradient id="c91" gradientUnits="userSpaceOnUse" x1="1401" x2="1659"><stop offset="0" stop-color="#000bff"/><stop offset="0.186" stop-color="#00f"/><stop offset="1" stop-color="#b700ff"/></linearGradient><linearGradient id="c92" gradientUnits="userSpaceOnUse" x1="1404" x2="1655"><stop offset="0" stop-color="#0009ff"/><stop offset="0.183" stop-color="#00f"/><stop offset="1" stop-color="#b100ff"/></linearGradient><linearGradient id="c93" gradientUnits="userSpaceOnUse" x1="1407" x2="1651"><stop offset="0" stop-color="#0007ff"/><stop offset="0.18" stop-color="#00f"/><stop offset="1" stop-color="#a0f"/></linearGradient><linearGradient id="c94" gradientUnits="userSpaceOnUse" x1="1410" x2="1647"><stop offset="0" stop-color="#0006ff"/><stop offset="0.173" stop-color="#00f"/><stop offset="1" stop-color="#a400ff"/></linearGradient><linearGradient id="c95" gradientUnits="userSpaceOnUse" x1="1413" x2="1643"><stop offset="0" stop-color="#0004ff"/><stop offset="0.17" stop-color="#00f"/><stop offset="1" stop-color="#9e00ff"/></linearGradient><linearGradient id="c96" gradientUnits="userSpaceOnUse" x1="1416" x2="1639"><stop offset="0" stop-color="#0002ff"/><stop offset="0.166" stop-color="#00f"/><stop offset="1" stop-color="#9800ff"/></linearGradient><linearGradient id="c97" gradientUnits="userSpaceOnUse" x1="1419" x2="1635"><stop offset="0" stop-color="#0001ff"/><stop offset="0.157" stop-color="#00f"/><stop offset="1" stop-color="#9200ff"/></linearGradient><linearGradient id="c98" gradientUnits="userSpaceOnUse" x1="1423" x2="1631"><stop offset="0" stop-color="#00f"/><stop offset="0.149" stop-color="#00f"/><stop offset="1" stop-color="#8d00ff"/></linearGradient><linearGradient id="c99" gradientUnits="userSpaceOnUse" x1="1426" x2="1628"><stop offset="0" stop-color="#00f"/><stop offset="0.144" stop-color="#0100ff"/><stop offset="1" stop-color="#80f"/></linearGradient><linearGradient id="c100" gradientUnits="userSpaceOnUse" x1="1429" x2="1624"><stop offset="0" stop-color="#00f"/><stop offset="0.133" stop-color="#00f"/><stop offset="1" stop-color="#8300ff"/></linearGradient><linearGradient id="c101" gradientUnits="userSpaceOnUse" x1="1433" x2="1620"><stop offset="0" stop-color="#00f"/><stop offset="0.123" stop-color="#00f"/><stop offset="1" stop-color="#7e00ff"/></linearGradient><linearGradient id="c102" gradientUnits="userSpaceOnUse" x1="1436" x2="1616"><stop offset="0" stop-color="#00f"/><stop offset="0.117" stop-color="#0100ff"/><stop offset="1" stop-color="#7900ff"/></linearGradient><linearGradient id="c103" gradientUnits="userSpaceOnUse" x1="1440" x2="1612"><stop offset="0" stop-color="#00f"/><stop offset="0.099" stop-color="#00f"/><stop offset="1" stop-color="#7400ff"/></linearGradient><linearGradient id="c104" gradientUnits="userSpaceOnUse" x1="1444" x2="1608"><stop offset="0" stop-color="#00f"/><stop offset="0.085" stop-color="#00f"/><stop offset="1" stop-color="#6f00ff"/></linearGradient><linearGradient id="c105" gradientUnits="userSpaceOnUse" x1="1448" x2="1604"><stop offset="0" stop-color="#00f"/><stop offset="0.071" stop-color="#0100ff"/><stop offset="1" stop-color="#6a00ff"/></linearGradient><linearGradient id="c106" gradientUnits="userSpaceOnUse" x1="1452" x2="1600"><stop offset="0" stop-color="#00f"/><stop offset="1" stop-color="#60f"/></linearGradient><linearGradient id="c107" gradientUnits="userSpaceOnUse" x1="1456" x2="1596"><stop offset="0" stop-color="#00f"/><stop offset="1" stop-color="#6100ff"/></linearGradient><linearGradient id="c108" gradientUnits="userSpaceOnUse" x1="1460" x2="1592"><stop offset="0" stop-color="#00f"/><stop offset="1" stop-color="#5d00ff"/></linearGradient><linearGradient id="c109" gradientUnits="userSpaceOnUse" x1="1465" x2="1589"><stop offset="0" stop-color="#0300ff"/><stop offset="1" stop-color="#5900ff"/></linearGradient><linearGradient id="c110" gradientUnits="userSpaceOnUse" x1="1469" x2="1585"><stop offset="0" stop-color="#0500ff"/><stop offset="1" stop-color="#50f"/></linearGradient><linearGradient id="c111" gradientUnits="userSpaceOnUse" x1="1474" x2="1581"><stop offset="0" stop-color="#0800ff"/><stop offset="1" stop-color="#5100ff"/></linearGradient><linearGradient id="c112" gradientUnits="userSpaceOnUse" x1="1479" x2="1577"><stop offset="0" stop-color="#0b00ff"/><stop offset="1" stop-color="#4d00ff"/></linearGradient><linearGradient id="c113" gradientUnits="userSpaceOnUse" x1="1483" x2="1573"><stop offset="0" stop-color="#0d00ff"/><stop offset="1" stop-color="#4900ff"/></linearGradient><linearGradient id="c114" gradientUnits="userSpaceOnUse" x1="1488" x2="1569"><stop offset="0" stop-color="#1000ff"/><stop offset="1" stop-color="#4500ff"/></linearGradient><linearGradient id="c115" gradientUnits="userSpaceOnUse" x1="1493" x2="1565"><stop offset="0" stop-color="#1200ff"/><stop offset="1" stop-color="#4200ff"/></linearGradient><linearGradient id="c116" gradientUnits="userSpaceOnUse" x1="1498" x2="1561"><stop offset="0" stop-color="#1500ff"/><stop offset="1" stop-color="#3e00ff"/></linearGradient><linearGradient id="c117" gradientUnits="userSpaceOnUse" x1="1503" x2="1557"><stop offset="0" stop-color="#1700ff"/><stop offset="1" stop-color="#3a00ff"/></linearGradient><linearGradient id="c118" gradientUnits="userSpaceOnUse" x1="1508" x2="1553"><stop offset="0" stop-color="#1a00ff"/><stop offset="1" stop-color="#3700ff"/></linearGradient><linearGradient id="c119" gradientUnits="userSpaceOnUse" x1="1513" x2="1550"><stop offset="0" stop-color="#1c00ff"/><stop offset="1" stop-color="#3400ff"/></linearGradient><linearGradient id="c120" gradientUnits="userSpaceOnUse" x1="1518" x2="1546"><stop offset="0" stop-color="#1f00ff"/><stop offset="1" stop-color="#3000ff"/></linearGradient><linearGradient id="c121" gradientUnits="userSpaceOnUse" x1="1525" x2="1542"><stop offset="0" stop-color="#2300ff"/><stop offset="1" stop-color="#2d00ff"/></linearGradient><clipPath id="lc"><polygon points="1535.6,701.6 1535.4,701.7 1535.2,701.7 1534.9,701.7 1534.5,701.6 1534.2,701.6 1533.9,701.6 1533.5,701.6 1533.1,701.6 1532.5,701.6 1531.7,701.4 1530.7,701.0 1529.6,700.5 1528.3,699.8 1526.8,698.9 1525.1,697.8 1523.1,696.5 1520.9,695.0 1518.5,693.2 1515.8,691.1 1512.9,688.8 1509.6,686.1 1506.1,683.1 1502.0,679.8 1497.6,676.1 1492.7,672.1 1487.5,667.8 1481.8,663.1 1475.7,657.9 1469.1,652.0 1462.0,645.4 1454.4,638.2 1446.2,629.7 1437.0,619.5 1426.5,607.0 1414.9,592.4 1402.6,576.1 1389.7,557.9 1376.3,537.8 1362.5,515.9 1348.6,493.0 1334.9,469.3 1321.7,445.3 1309.6,421.4 1298.9,398.2 1289.5,376.1 1281.4,355.4 1274.7,336.5 1269.5,319.6 1265.6,304.8 1262.8,291.9 1261.2,280.7 1260.6,271.2 1260.9,262.9 1262.1,255.8 1264.1,249.8 1266.9,244.7 1270.4,240.6 1274.5,237.4 1279.1,235.0 1284.1,233.3 1289.4,232.2 1295.1,231.5 1301.0,231.1 1307.1,230.8 1313.2,230.7 1319.3,230.8 1325.5,230.9 1331.8,231.0 1338.2,231.3 1344.7,231.7 1351.5,232.1 1358.5,232.6 1365.7,233.2 1373.2,233.9 1380.9,234.6 1389.0,235.4 1397.4,236.3 1406.1,237.2 1415.2,238.2 1424.6,239.2 1434.5,240.3 1444.7,241.4 1455.4,242.6 1466.5,243.9 1478.1,245.2 1490.1,246.5 1502.6,248.0 1515.5,249.5 1528.9,251.0 1542.7,252.6 1556.9,254.2 1571.6,255.9 1586.5,257.6 1601.8,259.4 1617.4,261.2 1633.3,263.0 1649.1,264.8 1664.8,266.6 1680.1,268.4 1695.3,270.1 1710.4,271.8 1725.3,273.5 1739.6,275.2 1753.2,276.7 1766.2,278.2 1778.6,279.6 1790.4,281.0 1801.5,282.3 1811.8,283.5 1821.4,284.6 1830.4,285.6 1838.8,286.5 1846.6,287.4 1853.8,288.3 1860.7,289.0 1867.2,289.8 1873.3,290.5 1879.0,291.2 1884.4,291.8 1889.3,292.3 1893.9,292.9 1898.2,293.4 1901.9,293.8 1905.2,294.2 1908.2,294.5 1910.9,294.8 1913.4,295.1 1915.7,295.4 1917.6,295.6 1919.4,295.8 1920.8,296.0 1922.0,296.1 1923.1,296.2 1924.2,296.3 1925.2,296.5 1926.0,296.6 1926.8,296.7 1927.6,296.7 1928.5,296.8 1929.3,296.9 1930.0,297.0 1930.8,297.1 1931.4,297.2 1931.8,297.2 1932.1,297.3 1932.4,297.3 1932.6,297.3 1932.8,297.3 1932.9,297.4 1933.0,297.4"/></clipPath><clipPath id="pc"><rect x="1259.1" y="218" width="649.8" height="499.7"/></clipPath><filter id="bl" x="0" y="0" width="1" height="1" filterUnits="objectBoundingBox"><feGaussianBlur stdDeviation="0 1.6"/></filter></defs><rect x="1259.1" y="218" width="649.8" height="499.7" fill="#232323"/><g clip-path="url(#pc)"><g clip-path="url(#lc)"><g filter="url(#bl)"><rect x="1280" y="223" width="88" height="4" fill="url(#c0)"/><rect x="1270" y="227" width="140" height="4" fill="url(#c1)"/><rect x="1264" y="231" width="183" height="4" fill="url(#c2)"/><rect x="1261" y="235" width="221" height="4" fill="url(#c3)"/><rect x="1259" y="239" width="258" height="4" fill="url(#c4)"/><rect x="1257" y="243" width="295" height="4" fill="url(#c5)"/><rect x="1256" y="247" width="331" height="4" fill="url(#c6)"/><rect x="1256" y="251" width="366" height="4" fill="url(#c7)"/><rect x="1255" y="255" width="401" height="4" fill="url(#c8)"/><rect x="1255" y="259" width="436" height="4" fill="url(#c9)"/><rect x="1255" y="263" width="471" height="4" fill="url(#c10)"/><rect x="1255" y="267" width="506" height="4" fill="url(#c11)"/><rect x="1255" y="271" width="541" height="4" fill="url(#c12)"/><rect x="1255" y="275" width="576" height="4" fill="url(#c13)"/><rect x="1255" y="279" width="611" height="4" fill="url(#c14)"/><rect x="1255" y="283" width="646" height="4" fill="url(#c15)"/><rect x="1256" y="287" width="660" height="4" fill="url(#c16)"/><rect x="1256" y="291" width="660" height="4" fill="url(#c17)"/><rect x="1257" y="295" width="659" height="4" fill="url(#c18)"/><rect x="1258" y="299" width="658" height="4" fill="url(#c19)"/><rect x="1258" y="303" width="658" height="4" fill="url(#c20)"/><rect x="1259" y="307" width="657" height="4" fill="url(#c21)"/><rect x="1260" y="311" width="656" height="4" fill="url(#c22)"/><rect x="1261" y="315" width="655" height="4" fill="url(#c23)"/><rect x="1262" y="319" width="654" height="4" fill="url(#c24)"/><rect x="1263" y="323" width="653" height="4" fill="url(#c25)"/><rect x="1264" y="327" width="649" height="4" fill="url(#c26)"/><rect x="1266" y="331" width="643" height="4" fill="url(#c27)"/><rect x="1267" y="335" width="638" height="4" fill="url(#c28)"/><rect x="1268" y="339" width="633" height="4" fill="url(#c29)"/><rect x="1269" y="343" width="628" height="4" fill="url(#c30)"/><rect x="1271" y="347" width="622" height="4" fill="url(#c31)"/><rect x="1272" y="351" width="617" height="4" fill="url(#c32)"/><rect x="1274" y="355" width="611" height="4" fill="url(#c33)"/><rect x="1275" y="359" width="606" height="4" fill="url(#c34)"/><rect x="1277" y="363" width="600" height="4" fill="url(#c35)"/><rect x="1278" y="367" width="596" height="4" fill="url(#c36)"/><rect x="1280" y="371" width="590" height="4" fill="url(#c37)"/><rect x="1281" y="375" width="585" height="4" fill="url(#c38)"/><rect x="1283" y="379" width="579" height="4" fill="url(#c39)"/><rect x="1284" y="383" width="574" height="4" fill="url(#c40)"/><rect x="1286" y="387" width="568" height="4" fill="url(#c41)"/><rect x="1288" y="391" width="562" height="4" fill="url(#c42)"/><rect x="1289" y="395" width="557" height="4" fill="url(#c43)"/><rect x="1291" y="399" width="551" height="4" fill="url(#c44)"/><rect x="1293" y="403" width="545" height="4" fill="url(#c45)"/><rect x="1295" y="407" width="539" height="4" fill="url(#c46)"/><rect x="1296" y="411" width="535" height="4" fill="url(#c47)"/><rect x="1298" y="415" width="529" height="4" fill="url(#c48)"/><rect x="1300" y="419" width="523" height="4" fill="url(#c49)"/><rect x="1302" y="423" width="517" height="4" fill="url(#c50)"/><rect x="1304" y="427" width="511" height="4" fill="url(#c51)"/><rect x="1306" y="431" width="505" height="4" fill="url(#c52)"/><rect x="1308" y="435" width="499" height="4" fill="url(#c53)"/><rect x="1310" y="439" width="493" height="4" fill="url(#c54)"/><rect x="1312" y="443" width="487" height="4" fill="url(#c55)"/><rect x="1314" y="447" width="481" height="4" fill="url(#c56)"/><rect x="1316" y="451" width="476" height="4" fill="url(#c57)"/><rect x="1318" y="455" width="470" height="4" fill="url(#c58)"/><rect x="1320" y="459" width="464" height="4" fill="url(#c59)"/><rect x="1323" y="463" width="457" height="4" fill="url(#c60)"/><rect x="1325" y="467" width="451" height="4" fill="url(#c61)"/><rect x="1327" y="471" width="445" height="4" fill="url(#c62)"/><rect x="1329" y="475" width="439" height="4" fill="url(#c63)"/><rect x="1331" y="479" width="433" height="4" fill="url(#c64)"/><rect x="1334" y="483" width="426" height="4" fill="url(#c65)"/><rect x="1336" y="487" width="420" height="4" fill="url(#c66)"/><rect x="1338" y="491" width="414" height="4" fill="url(#c67)"/><rect x="1341" y="495" width="408" height="4" fill="url(#c68)"/><rect x="1343" y="499" width="402" height="4" fill="url(#c69)"/><rect x="1346" y="503" width="395" height="4" fill="url(#c70)"/><rect x="1348" y="507" width="389" height="4" fill="url(#c71)"/><rect x="1350" y="511" width="383" height="4" fill="url(#c72)"/><rect x="1353" y="515" width="376" height="4" fill="url(#c73)"/><rect x="1355" y="519" width="370" height="4" fill="url(#c74)"/><rect x="1358" y="523" width="363" height="4" fill="url(#c75)"/><rect x="1360" y="527" width="357" height="4" fill="url(#c76)"/><rect x="1363" y="531" width="350" height="4" fill="url(#c77)"/><rect x="1365" y="535" width="345" height="4" fill="url(#c78)"/><rect x="1368" y="539" width="338" height="4" fill="url(#c79)"/><rect x="1370" y="543" width="332" height="4" fill="url(#c80)"/><rect x="1373" y="547" width="325" height="4" fill="url(#c81)"/><rect x="1376" y="551" width="318" height="4" fill="url(#c82)"/><rect x="1378" y="555" width="312" height="4" fill="url(#c83)"/><rect x="1381" y="559" width="305" height="4" fill="url(#c84)"/><rect x="1384" y="563" width="298" height="4" fill="url(#c85)"/><rect x="1386" y="567" width="292" height="4" fill="url(#c86)"/><rect x="1389" y="571" width="285" height="4" fill="url(#c87)"/><rect x="1392" y="575" width="279" height="4" fill="url(#c88)"/><rect x="1395" y="579" width="272" height="4" fill="url(#c89)"/><rect x="1398" y="583" width="265" height="4" fill="url(#c90)"/><rect x="1401" y="587" width="258" height="4" fill="url(#c91)"/><rect x="1404" y="591" width="251" height="4" fill="url(#c92)"/><rect x="1407" y="595" width="244" height="4" fill="url(#c93)"/><rect x="1410" y="599" width="237" height="4" fill="url(#c94)"/><rect x="1413" y="603" width="230" height="4" fill="url(#c95)"/><rect x="1416" y="607" width="223" height="4" fill="url(#c96)"/><rect x="1419" y="611" width="216" height="4" fill="url(#c97)"/><rect x="1423" y="615" width="208" height="4" fill="url(#c98)"/><rect x="1426" y="619" width="202" height="4" fill="url(#c99)"/><rect x="1429" y="623" width="195" height="4" fill="url(#c100)"/><rect x="1433" y="627" width="187" height="4" fill="url(#c101)"/><rect x="1436" y="631" width="180" height="4" fill="url(#c102)"/><rect x="1440" y="635" width="172" height="4" fill="url(#c103)"/><rect x="1444" y="639" width="164" height="4" fill="url(#c104)"/><rect x="1448" y="643" width="156" height="4" fill="url(#c105)"/><rect x="1452" y="647" width="148" height="4" fill="url(#c106)"/><rect x="1456" y="651" width="140" height="4" fill="url(#c107)"/><rect x="1460" y="655" width="132" height="4" fill="url(#c108)"/><rect x="1465" y="659" width="124" height="4" fill="url(#c109)"/><rect x="1469" y="663" width="116" height="4" fill="url(#c110)"/><rect x="1474" y="667" width="107" height="4" fill="url(#c111)"/><rect x="1479" y="671" width="98" height="4" fill="url(#c112)"/><rect x="1483" y="675" width="90" height="4" fill="url(#c113)"/><rect x="1488" y="679" width="81" height="4" fill="url(#c114)"/><rect x="1493" y="683" width="72" height="4" fill="url(#c115)"/><rect x="1498" y="687" width="63" height="4" fill="url(#c116)"/><rect x="1503" y="691" width="54" height="4" fill="url(#c117)"/><rect x="1508" y="695" width="45" height="4" fill="url(#c118)"/><rect x="1513" y="699" width="37" height="4" fill="url(#c119)"/><rect x="1518" y="703" width="28" height="4" fill="url(#c120)"/><rect x="1525" y="707" width="17" height="4" fill="url(#c121)"/></g><path fill-rule="evenodd" d="M1200 150H1930V760H1200zM1746.3 283.7L1394.2 250.9L1448.7 586.7z" fill="#000" opacity=".4"/></g></g><rect x="1259.1" y="218" width="649.8" height="499.7" fill="none" stroke="#9c9c9c" stroke-width="1.3"/><path d="M1259.1 717.7v6M1259.1 717.8h-6M1313.1 717.7v6M1259.1 676.2h-6M1367.2 717.7v6M1259.1 634.8h-6M1421.2 717.7v6M1259.1 593.2h-6M1475.3 717.7v6M1259.1 551.8h-6M1529.3 717.7v6M1259.1 510.2h-6M1583.4 717.7v6M1259.1 468.8h-6M1637.4 717.7v6M1259.1 427.2h-6M1691.5 717.7v6M1259.1 385.8h-6M1745.5 717.7v6M1259.1 344.2h-6M1799.6 717.7v6M1259.1 302.8h-6M1853.7 717.7v6M1259.1 261.2h-6" stroke="#d8d8d8" stroke-width="1.3" fill="none"/><rect x="1386.8" y="241.3" width="13.6" height="13.6" fill="none" stroke="#f4f4f4" stroke-width="1.5"/><circle cx="1392.5" cy="248.1" r="4.3" fill="#00ff00" stroke="#111" stroke-width="1.3"/><rect x="1411.6" y="265.9" width="13.6" height="13.6" fill="none" stroke="#f4f4f4" stroke-width="1.5"/><circle cx="1417.4" cy="272.0" r="4.3" fill="#4c934e" stroke="#111" stroke-width="1.3"/><rect x="1451.5" y="257.7" width="13.6" height="13.6" fill="none" stroke="#f4f4f4" stroke-width="1.5"/><circle cx="1454.4" cy="263.3" r="4.3" fill="#a2b746" stroke="#111" stroke-width="1.3"/><rect x="1448.8" y="280.2" width="13.6" height="13.6" fill="none" stroke="#f4f4f4" stroke-width="1.5"/><circle cx="1455.6" cy="287.0" r="4.3" fill="#57693f" stroke="#111" stroke-width="1.3"/><rect x="1472.4" y="249.5" width="13.6" height="13.6" fill="none" stroke="#f4f4f4" stroke-width="1.5"/><circle cx="1478.0" cy="255.4" r="4.3" fill="#ffff00" stroke="#111" stroke-width="1.3"/><rect x="1499.8" y="254.1" width="13.6" height="13.6" fill="none" stroke="#f4f4f4" stroke-width="1.5"/><circle cx="1504.4" cy="260.6" r="4.3" fill="#e6c628" stroke="#111" stroke-width="1.3"/><rect x="1532.1" y="260.9" width="13.6" height="13.6" fill="none" stroke="#f4f4f4" stroke-width="1.5"/><circle cx="1537.3" cy="266.3" r="4.3" fill="#dfa22f" stroke="#111" stroke-width="1.3"/><rect x="1576.1" y="264.7" width="13.6" height="13.6" fill="none" stroke="#f4f4f4" stroke-width="1.5"/><circle cx="1581.5" cy="271.7" r="4.3" fill="#d57c2f" stroke="#111" stroke-width="1.3"/><rect x="1657.6" y="295.4" width="13.6" height="13.6" fill="none" stroke="#f4f4f4" stroke-width="1.5"/><circle cx="1661.7" cy="300.6" r="4.3" fill="#ad353b" stroke="#111" stroke-width="1.3"/><rect x="1595.4" y="307.6" width="13.6" height="13.6" fill="none" stroke="#f4f4f4" stroke-width="1.5"/><circle cx="1602.2" cy="313.1" r="4.3" fill="#c05a63" stroke="#111" stroke-width="1.3"/><rect x="1515.1" y="293.8" width="13.6" height="13.6" fill="none" stroke="#f4f4f4" stroke-width="1.5"/><circle cx="1519.1" cy="300.6" r="4.3" fill="#735244" stroke="#111" stroke-width="1.3"/><rect x="1504.2" y="300.6" width="13.6" height="13.6" fill="none" stroke="#f4f4f4" stroke-width="1.5"/><circle cx="1508.0" cy="304.9" r="4.3" fill="#c29682" stroke="#111" stroke-width="1.3"/><rect x="1418.4" y="311.7" width="13.6" height="13.6" fill="none" stroke="#f4f4f4" stroke-width="1.5"/><circle cx="1424.0" cy="317.6" r="4.3" fill="#69bba9" stroke="#111" stroke-width="1.3"/><rect x="1401.6" y="331.4" width="13.6" height="13.6" fill="none" stroke="#f4f4f4" stroke-width="1.5"/><circle cx="1406.1" cy="335.8" r="4.3" fill="#00ffff" stroke="#111" stroke-width="1.3"/><rect x="1407.2" y="362.8" width="13.6" height="13.6" fill="none" stroke="#f4f4f4" stroke-width="1.5"/><circle cx="1411.1" cy="367.3" r="4.3" fill="#0a86a2" stroke="#111" stroke-width="1.3"/><rect x="1442.2" y="360.3" width="13.6" height="13.6" fill="none" stroke="#f4f4f4" stroke-width="1.5"/><circle cx="1447.4" cy="365.7" r="4.3" fill="#60799c" stroke="#111" stroke-width="1.3"/><rect x="1462.6" y="365.7" width="13.6" height="13.6" fill="none" stroke="#f4f4f4" stroke-width="1.5"/><circle cx="1468.3" cy="370.0" r="4.3" fill="#8480b0" stroke="#111" stroke-width="1.3"/><rect x="1562.3" y="354.8" width="13.6" height="13.6" fill="none" stroke="#f4f4f4" stroke-width="1.5"/><circle cx="1567.9" cy="361.6" r="4.3" fill="#ba5694" stroke="#111" stroke-width="1.3"/><rect x="1498.7" y="383.9" width="13.6" height="13.6" fill="none" stroke="#f4f4f4" stroke-width="1.5"/><circle cx="1491.4" cy="395.0" r="4.3" fill="#5b3c6b" stroke="#111" stroke-width="1.3"/><rect x="1444.5" y="413.8" width="13.6" height="13.6" fill="none" stroke="#f4f4f4" stroke-width="1.5"/><circle cx="1448.8" cy="418.4" r="4.3" fill="#4e5aa5" stroke="#111" stroke-width="1.3"/><rect x="1581.8" y="434.7" width="13.6" height="13.6" fill="none" stroke="#f4f4f4" stroke-width="1.5"/><circle cx="1585.9" cy="437.7" r="4.3" fill="#ff00ff" stroke="#111" stroke-width="1.3"/><rect x="1444.7" y="464.9" width="13.6" height="13.6" fill="none" stroke="#f4f4f4" stroke-width="1.5"/><circle cx="1450.1" cy="469.2" r="4.3" fill="#373c95" stroke="#111" stroke-width="1.3"/><rect x="1739.6" y="274.4" width="13.6" height="13.6" fill="none" stroke="#f4f4f4" stroke-width="1.5"/><circle cx="1747.5" cy="281.7" r="4.3" fill="#ff0000" stroke="#111" stroke-width="1.3"/><rect x="1442.1" y="578.1" width="13.6" height="13.6" fill="none" stroke="#f4f4f4" stroke-width="1.5"/><circle cx="1445.8" cy="571.7" r="4.3" fill="#0000ff" stroke="#111" stroke-width="1.3"/><rect x="1465.9" y="320.4" width="13" height="13" fill="none" stroke="#000" stroke-width="2.4"/><circle cx="1470.8" cy="325.8" r="4.3" fill="#a0a0a0" stroke="#111" stroke-width="1.3"/><circle cx="1476.5" cy="327.4" r="4.5" fill="#000"/><defs><linearGradient id="ig" gradientUnits="userSpaceOnUse" x1="1700" y1="560" x2="1903" y2="664"><stop offset="0" stop-color="#a8ff00"/><stop offset=".5" stop-color="#ffff14"/><stop offset="1" stop-color="#ffa800"/></linearGradient><clipPath id="ic"><rect x="1701.5" y="543" width="200" height="131"/></clipPath></defs><rect x="1700.7" y="542.3" width="201.6" height="132.6" fill="url(#ig)" stroke="#6a6a6a" stroke-width="2"/><path d="M1701.5 543H1901.5V659.6L1701.5 556.6z" fill="#000" opacity=".4" clip-path="url(#ic)"/><rect x="1794" y="601.5" width="14" height="14" fill="none" stroke="#f8f8f8" stroke-width="1.5"/><circle cx="1792.5" cy="599.6" r="4.3" fill="#ffee00" stroke="#111" stroke-width="1.4"/></svg><span class="t" style="left:1523.5px;top:200.2px;font-size:14.5px;line-height:14.5px;color:#f0f0f0;transform:scaleX(1.008);">CIE 1976 u&#x27;v&#x27;</span><div style="left:1649px;top:685px;width:256px;height:26.6px;background:#333"></div><span class="t" style="left:1650.0px;top:689.5px;font-size:19.5px;line-height:19.5px;color:#f4f4f4;transform:scaleX(1.026);">RGB Triplet: 255, 255, 0</span><span class="t" style="left:1255.1px;top:726.9px;font-size:14px;line-height:14px;color:#f0f0f0;transform:scaleX(1.040);">0</span><span class="t" style="left:1244.2px;top:712.6px;font-size:14px;line-height:14px;color:#f0f0f0;transform:scaleX(1.040);">0</span><span class="t" style="left:1299.0px;top:726.9px;font-size:14px;line-height:14px;color:#f0f0f0;transform:scaleX(1.040);">0.05</span><span class="t" style="left:1224.0px;top:669.6px;font-size:14px;line-height:14px;color:#f0f0f0;transform:scaleX(1.040);">0.05</span><span class="t" style="left:1357.1px;top:726.9px;font-size:14px;line-height:14px;color:#f0f0f0;transform:scaleX(1.040);">0.1</span><span class="t" style="left:1232.1px;top:628.1px;font-size:14px;line-height:14px;color:#f0f0f0;transform:scaleX(1.040);">0.1</span><span class="t" style="left:1407.1px;top:726.9px;font-size:14px;line-height:14px;color:#f0f0f0;transform:scaleX(1.040);">0.15</span><span class="t" style="left:1224.0px;top:586.6px;font-size:14px;line-height:14px;color:#f0f0f0;transform:scaleX(1.040);">0.15</span><span class="t" style="left:1465.2px;top:726.9px;font-size:14px;line-height:14px;color:#f0f0f0;transform:scaleX(1.040);">0.2</span><span class="t" style="left:1232.1px;top:545.1px;font-size:14px;line-height:14px;color:#f0f0f0;transform:scaleX(1.040);">0.2</span><span class="t" style="left:1515.2px;top:726.9px;font-size:14px;line-height:14px;color:#f0f0f0;transform:scaleX(1.040);">0.25</span><span class="t" style="left:1224.0px;top:503.6px;font-size:14px;line-height:14px;color:#f0f0f0;transform:scaleX(1.040);">0.25</span><span class="t" style="left:1573.3px;top:726.9px;font-size:14px;line-height:14px;color:#f0f0f0;transform:scaleX(1.040);">0.3</span><span class="t" style="left:1232.1px;top:462.1px;font-size:14px;line-height:14px;color:#f0f0f0;transform:scaleX(1.040);">0.3</span><span class="t" style="left:1623.3px;top:726.9px;font-size:14px;line-height:14px;color:#f0f0f0;transform:scaleX(1.040);">0.35</span><span class="t" style="left:1224.0px;top:420.6px;font-size:14px;line-height:14px;color:#f0f0f0;transform:scaleX(1.040);">0.35</span><span class="t" style="left:1681.4px;top:726.9px;font-size:14px;line-height:14px;color:#f0f0f0;transform:scaleX(1.040);">0.4</span><span class="t" style="left:1232.1px;top:379.1px;font-size:14px;line-height:14px;color:#f0f0f0;transform:scaleX(1.040);">0.4</span><span class="t" style="left:1731.4px;top:726.9px;font-size:14px;line-height:14px;color:#f0f0f0;transform:scaleX(1.040);">0.45</span><span class="t" style="left:1224.0px;top:337.6px;font-size:14px;line-height:14px;color:#f0f0f0;transform:scaleX(1.040);">0.45</span><span class="t" style="left:1789.5px;top:726.9px;font-size:14px;line-height:14px;color:#f0f0f0;transform:scaleX(1.040);">0.5</span><span class="t" style="left:1232.1px;top:296.1px;font-size:14px;line-height:14px;color:#f0f0f0;transform:scaleX(1.040);">0.5</span><span class="t" style="left:1839.5px;top:726.9px;font-size:14px;line-height:14px;color:#f0f0f0;transform:scaleX(1.040);">0.55</span><span class="t" style="left:1224.0px;top:254.6px;font-size:14px;line-height:14px;color:#f0f0f0;transform:scaleX(1.040);">0.55</span><span class="t" style="left:277.2px;top:761.6px;font-size:28.5px;line-height:28.5px;color:#f4f4f4;transform:scaleX(1.043);">Avg dE2000: 1.39</span><span class="t" style="left:273.0px;top:802.8px;font-size:28.5px;line-height:28.5px;color:#f4f4f4;transform:scaleX(1.057);">Max dE2000: 3.95</span><span class="t" style="left:240.4px;top:852.1px;font-size:27.5px;line-height:27.5px;color:#f4f4f4;transform:scaleX(1.098);">Current Reading</span><span class="t" style="left:240.4px;top:891.2px;font-size:24px;line-height:24px;color:#f4f4f4;transform:scaleX(1.049);">x: 0.4172</span><span class="t" style="left:399.2px;top:891.2px;font-size:24px;line-height:24px;color:#f4f4f4;transform:scaleX(1.061);">y: 0.5086</span><span class="t" style="left:240.4px;top:932.2px;font-size:24px;line-height:24px;color:#f4f4f4;transform:scaleX(1.042);">fL: 97.92</span><span class="t" style="left:240.4px;top:966.7px;font-size:24px;line-height:24px;color:#f4f4f4;transform:scaleX(1.100);">cd/m²: 335.5</span><div style="left:551.4px;top:768.2px;width:1366px;height:231.5px;background:#1e1e1e;overflow:hidden"><div style="left:2px;top:2px;width:1364px;height:23.6px;background:linear-gradient(#303030 0%,#2b2b2b 48%,#0d0d0d 50%,#151515 100%)"></div><div style="left:2px;top:25.5px;width:1364px;height:23.9px;background:#424242"></div><div style="left:2px;top:49.2px;width:1364px;height:23.9px;background:#828282"></div><div style="left:2px;top:72.9px;width:1364px;height:23.9px;background:#424242"></div><div style="left:2px;top:96.6px;width:1364px;height:23.9px;background:#828282"></div><div style="left:2px;top:120.3px;width:1364px;height:23.9px;background:#424242"></div><div style="left:2px;top:144px;width:1364px;height:23.9px;background:#828282"></div><div style="left:2px;top:167.7px;width:1364px;height:23.9px;background:#424242"></div><div style="left:2px;top:191.4px;width:1364px;height:23.9px;background:#828282"></div><span class="t" style="left:16.4px;top:30.7px;font-size:15.5px;line-height:15.5px;color:#fafafa;font-weight:700;transform:scaleX(1.177);">x: CIE31</span><span class="t" style="left:169.6px;top:30.7px;font-size:15.5px;line-height:15.5px;color:#fafafa;transform:scaleX(1.210);">0.31</span><span class="t" style="left:237.4px;top:30.7px;font-size:15.5px;line-height:15.5px;color:#fafafa;transform:scaleX(1.210);">0.31</span><span class="t" style="left:309.2px;top:30.7px;font-size:15.5px;line-height:15.5px;color:#fafafa;transform:scaleX(1.210);">0.31</span><span class="t" style="left:381.1px;top:30.7px;font-size:15.5px;line-height:15.5px;color:#fafafa;transform:scaleX(1.210);">0.31</span><span class="t" style="left:452.9px;top:30.7px;font-size:15.5px;line-height:15.5px;color:#fafafa;transform:scaleX(1.210);">0.31</span><span class="t" style="left:524.6px;top:30.7px;font-size:15.5px;line-height:15.5px;color:#fafafa;transform:scaleX(1.210);">0.32</span><span class="t" style="left:582.2px;top:30.7px;font-size:15.5px;line-height:15.5px;color:#fafafa;transform:scaleX(1.210);">0.40</span><span class="t" style="left:667.9px;top:30.7px;font-size:15.5px;line-height:15.5px;color:#fafafa;transform:scaleX(1.210);">0.38</span><span class="t" style="left:754.8px;top:30.7px;font-size:15.5px;line-height:15.5px;color:#fafafa;transform:scaleX(1.210);">0.25</span><span class="t" style="left:832.0px;top:30.7px;font-size:15.5px;line-height:15.5px;color:#fafafa;transform:scaleX(1.210);">0.34</span><span class="t" style="left:898.9px;top:30.7px;font-size:15.5px;line-height:15.5px;color:#fafafa;transform:scaleX(1.210);">0.27</span><span class="t" style="left:1004.5px;top:30.7px;font-size:15.5px;line-height:15.5px;color:#fafafa;transform:scaleX(1.210);">0.26</span><span class="t" style="left:1117.0px;top:30.7px;font-size:15.5px;line-height:15.5px;color:#fafafa;transform:scaleX(1.210);">0.51</span><span class="t" style="left:1185.2px;top:30.7px;font-size:15.5px;line-height:15.5px;color:#fafafa;transform:scaleX(1.210);">0.22</span><span class="t" style="left:1301.3px;top:30.7px;font-size:15.5px;line-height:15.5px;color:#fafafa;transform:scaleX(1.210);">0.46</span><span class="t" style="left:16.4px;top:54.4px;font-size:15.5px;line-height:15.5px;color:#fafafa;font-weight:700;transform:scaleX(1.177);">y: CIE31</span><span class="t" style="left:169.6px;top:54.4px;font-size:15.5px;line-height:15.5px;color:#fafafa;transform:scaleX(1.210);">0.33</span><span class="t" style="left:237.4px;top:54.4px;font-size:15.5px;line-height:15.5px;color:#fafafa;transform:scaleX(1.210);">0.33</span><span class="t" style="left:309.2px;top:54.4px;font-size:15.5px;line-height:15.5px;color:#fafafa;transform:scaleX(1.210);">0.33</span><span class="t" style="left:381.1px;top:54.4px;font-size:15.5px;line-height:15.5px;color:#fafafa;transform:scaleX(1.210);">0.33</span><span class="t" style="left:452.9px;top:54.4px;font-size:15.5px;line-height:15.5px;color:#fafafa;transform:scaleX(1.210);">0.33</span><span class="t" style="left:524.6px;top:54.4px;font-size:15.5px;line-height:15.5px;color:#fafafa;transform:scaleX(1.210);">0.33</span><span class="t" style="left:582.2px;top:54.4px;font-size:15.5px;line-height:15.5px;color:#fafafa;transform:scaleX(1.210);">0.37</span><span class="t" style="left:667.9px;top:54.4px;font-size:15.5px;line-height:15.5px;color:#fafafa;transform:scaleX(1.210);">0.36</span><span class="t" style="left:754.8px;top:54.4px;font-size:15.5px;line-height:15.5px;color:#fafafa;transform:scaleX(1.210);">0.27</span><span class="t" style="left:832.0px;top:54.4px;font-size:15.5px;line-height:15.5px;color:#fafafa;transform:scaleX(1.210);">0.43</span><span class="t" style="left:898.9px;top:54.4px;font-size:15.5px;line-height:15.5px;color:#fafafa;transform:scaleX(1.210);">0.26</span><span class="t" style="left:1004.5px;top:54.4px;font-size:15.5px;line-height:15.5px;color:#fafafa;transform:scaleX(1.210);">0.37</span><span class="t" style="left:1117.0px;top:54.4px;font-size:15.5px;line-height:15.5px;color:#fafafa;transform:scaleX(1.210);">0.41</span><span class="t" style="left:1185.2px;top:54.4px;font-size:15.5px;line-height:15.5px;color:#fafafa;transform:scaleX(1.210);">0.20</span><span class="t" style="left:1301.3px;top:54.4px;font-size:15.5px;line-height:15.5px;color:#fafafa;transform:scaleX(1.210);">0.32</span><span class="t" style="left:16.4px;top:78.1px;font-size:15.5px;line-height:15.5px;color:#fafafa;font-weight:700;transform:scaleX(1.112);">Y</span><span class="t" style="left:169.6px;top:78.1px;font-size:15.5px;line-height:15.5px;color:#fafafa;transform:scaleX(1.210);">364.26</span><span class="t" style="left:237.4px;top:78.1px;font-size:15.5px;line-height:15.5px;color:#fafafa;transform:scaleX(1.210);">287.05</span><span class="t" style="left:309.2px;top:78.1px;font-size:15.5px;line-height:15.5px;color:#fafafa;transform:scaleX(1.210);">233.25</span><span class="t" style="left:381.1px;top:78.1px;font-size:15.5px;line-height:15.5px;color:#fafafa;transform:scaleX(1.210);">176.95</span><span class="t" style="left:452.9px;top:78.1px;font-size:15.5px;line-height:15.5px;color:#fafafa;transform:scaleX(1.210);">122.84</span><span class="t" style="left:524.6px;top:78.1px;font-size:15.5px;line-height:15.5px;color:#fafafa;transform:scaleX(1.210);">0.51</span><span class="t" style="left:582.2px;top:78.1px;font-size:15.5px;line-height:15.5px;color:#fafafa;transform:scaleX(1.210);">36.45</span><span class="t" style="left:667.9px;top:78.1px;font-size:15.5px;line-height:15.5px;color:#fafafa;transform:scaleX(1.210);">127.42</span><span class="t" style="left:754.8px;top:78.1px;font-size:15.5px;line-height:15.5px;color:#fafafa;transform:scaleX(1.210);">66.57</span><span class="t" style="left:832.0px;top:78.1px;font-size:15.5px;line-height:15.5px;color:#fafafa;transform:scaleX(1.210);">46.82</span><span class="t" style="left:898.9px;top:78.1px;font-size:15.5px;line-height:15.5px;color:#fafafa;transform:scaleX(1.210);">84.85</span><span class="t" style="left:1004.5px;top:78.1px;font-size:15.5px;line-height:15.5px;color:#fafafa;transform:scaleX(1.210);">152.49</span><span class="t" style="left:1117.0px;top:78.1px;font-size:15.5px;line-height:15.5px;color:#fafafa;transform:scaleX(1.210);">102.38</span><span class="t" style="left:1185.2px;top:78.1px;font-size:15.5px;line-height:15.5px;color:#fafafa;transform:scaleX(1.210);">42.59</span><span class="t" style="left:1301.3px;top:78.1px;font-size:15.5px;line-height:15.5px;color:#fafafa;transform:scaleX(1.210);">67.37</span><span class="t" style="left:16.4px;top:101.8px;font-size:15.5px;line-height:15.5px;color:#fafafa;font-weight:700;transform:scaleX(1.220);">Target x:CIE31</span><span class="t" style="left:169.6px;top:101.8px;font-size:15.5px;line-height:15.5px;color:#fafafa;transform:scaleX(1.210);">0.31</span><span class="t" style="left:237.4px;top:101.8px;font-size:15.5px;line-height:15.5px;color:#fafafa;transform:scaleX(1.210);">0.31</span><span class="t" style="left:309.2px;top:101.8px;font-size:15.5px;line-height:15.5px;color:#fafafa;transform:scaleX(1.210);">0.31</span><span class="t" style="left:381.1px;top:101.8px;font-size:15.5px;line-height:15.5px;color:#fafafa;transform:scaleX(1.210);">0.31</span><span class="t" style="left:452.9px;top:101.8px;font-size:15.5px;line-height:15.5px;color:#fafafa;transform:scaleX(1.210);">0.31</span><span class="t" style="left:524.6px;top:101.8px;font-size:15.5px;line-height:15.5px;color:#fafafa;transform:scaleX(1.210);">0.31</span><span class="t" style="left:582.2px;top:101.8px;font-size:15.5px;line-height:15.5px;color:#fafafa;transform:scaleX(1.210);">0.40</span><span class="t" style="left:667.9px;top:101.8px;font-size:15.5px;line-height:15.5px;color:#fafafa;transform:scaleX(1.210);">0.38</span><span class="t" style="left:754.8px;top:101.8px;font-size:15.5px;line-height:15.5px;color:#fafafa;transform:scaleX(1.210);">0.25</span><span class="t" style="left:832.0px;top:101.8px;font-size:15.5px;line-height:15.5px;color:#fafafa;transform:scaleX(1.210);">0.34</span><span class="t" style="left:898.9px;top:101.8px;font-size:15.5px;line-height:15.5px;color:#fafafa;transform:scaleX(1.210);">0.27</span><span class="t" style="left:1004.5px;top:101.8px;font-size:15.5px;line-height:15.5px;color:#fafafa;transform:scaleX(1.210);">0.26</span><span class="t" style="left:1117.0px;top:101.8px;font-size:15.5px;line-height:15.5px;color:#fafafa;transform:scaleX(1.210);">0.51</span><span class="t" style="left:1185.2px;top:101.8px;font-size:15.5px;line-height:15.5px;color:#fafafa;transform:scaleX(1.210);">0.22</span><span class="t" style="left:1301.3px;top:101.8px;font-size:15.5px;line-height:15.5px;color:#fafafa;transform:scaleX(1.210);">0.46</span><span class="t" style="left:16.4px;top:125.5px;font-size:15.5px;line-height:15.5px;color:#fafafa;font-weight:700;transform:scaleX(1.220);">Target y:CIE31</span><span class="t" style="left:169.6px;top:125.5px;font-size:15.5px;line-height:15.5px;color:#fafafa;transform:scaleX(1.210);">0.33</span><span class="t" style="left:237.4px;top:125.5px;font-size:15.5px;line-height:15.5px;color:#fafafa;transform:scaleX(1.210);">0.33</span><span class="t" style="left:309.2px;top:125.5px;font-size:15.5px;line-height:15.5px;color:#fafafa;transform:scaleX(1.210);">0.33</span><span class="t" style="left:381.1px;top:125.5px;font-size:15.5px;line-height:15.5px;color:#fafafa;transform:scaleX(1.210);">0.33</span><span class="t" style="left:452.9px;top:125.5px;font-size:15.5px;line-height:15.5px;color:#fafafa;transform:scaleX(1.210);">0.33</span><span class="t" style="left:524.6px;top:125.5px;font-size:15.5px;line-height:15.5px;color:#fafafa;transform:scaleX(1.210);">0.33</span><span class="t" style="left:582.2px;top:125.5px;font-size:15.5px;line-height:15.5px;color:#fafafa;transform:scaleX(1.210);">0.36</span><span class="t" style="left:667.9px;top:125.5px;font-size:15.5px;line-height:15.5px;color:#fafafa;transform:scaleX(1.210);">0.36</span><span class="t" style="left:754.8px;top:125.5px;font-size:15.5px;line-height:15.5px;color:#fafafa;transform:scaleX(1.210);">0.27</span><span class="t" style="left:832.0px;top:125.5px;font-size:15.5px;line-height:15.5px;color:#fafafa;transform:scaleX(1.210);">0.43</span><span class="t" style="left:898.9px;top:125.5px;font-size:15.5px;line-height:15.5px;color:#fafafa;transform:scaleX(1.210);">0.25</span><span class="t" style="left:1004.5px;top:125.5px;font-size:15.5px;line-height:15.5px;color:#fafafa;transform:scaleX(1.210);">0.36</span><span class="t" style="left:1117.0px;top:125.5px;font-size:15.5px;line-height:15.5px;color:#fafafa;transform:scaleX(1.210);">0.41</span><span class="t" style="left:1185.2px;top:125.5px;font-size:15.5px;line-height:15.5px;color:#fafafa;transform:scaleX(1.210);">0.19</span><span class="t" style="left:1301.3px;top:125.5px;font-size:15.5px;line-height:15.5px;color:#fafafa;transform:scaleX(1.210);">0.31</span><span class="t" style="left:16.4px;top:149.2px;font-size:15.5px;line-height:15.5px;color:#fafafa;font-weight:700;transform:scaleX(1.271);">Target Y</span><span class="t" style="left:169.6px;top:149.2px;font-size:15.5px;line-height:15.5px;color:#fafafa;transform:scaleX(1.210);">364.26</span><span class="t" style="left:237.4px;top:149.2px;font-size:15.5px;line-height:15.5px;color:#fafafa;transform:scaleX(1.210);">288.24</span><span class="t" style="left:309.2px;top:149.2px;font-size:15.5px;line-height:15.5px;color:#fafafa;transform:scaleX(1.210);">232.25</span><span class="t" style="left:381.1px;top:149.2px;font-size:15.5px;line-height:15.5px;color:#fafafa;transform:scaleX(1.210);">178.86</span><span class="t" style="left:452.9px;top:149.2px;font-size:15.5px;line-height:15.5px;color:#fafafa;transform:scaleX(1.210);">124.55</span><span class="t" style="left:524.6px;top:149.2px;font-size:15.5px;line-height:15.5px;color:#fafafa;transform:scaleX(1.210);">0.00</span><span class="t" style="left:582.2px;top:149.2px;font-size:15.5px;line-height:15.5px;color:#fafafa;transform:scaleX(1.210);">36.69</span><span class="t" style="left:667.9px;top:149.2px;font-size:15.5px;line-height:15.5px;color:#fafafa;transform:scaleX(1.210);">127.11</span><span class="t" style="left:754.8px;top:149.2px;font-size:15.5px;line-height:15.5px;color:#fafafa;transform:scaleX(1.210);">68.11</span><span class="t" style="left:832.0px;top:149.2px;font-size:15.5px;line-height:15.5px;color:#fafafa;transform:scaleX(1.210);">47.47</span><span class="t" style="left:898.9px;top:149.2px;font-size:15.5px;line-height:15.5px;color:#fafafa;transform:scaleX(1.210);">84.94</span><span class="t" style="left:1004.5px;top:149.2px;font-size:15.5px;line-height:15.5px;color:#fafafa;transform:scaleX(1.210);">152.53</span><span class="t" style="left:1117.0px;top:149.2px;font-size:15.5px;line-height:15.5px;color:#fafafa;transform:scaleX(1.210);">103.26</span><span class="t" style="left:1185.2px;top:149.2px;font-size:15.5px;line-height:15.5px;color:#fafafa;transform:scaleX(1.210);">42.81</span><span class="t" style="left:1301.3px;top:149.2px;font-size:15.5px;line-height:15.5px;color:#fafafa;transform:scaleX(1.210);">68.03</span><span class="t" style="left:16.4px;top:172.9px;font-size:15.5px;line-height:15.5px;color:#fafafa;font-weight:700;transform:scaleX(1.269);">ΔE 2000</span><span class="t" style="left:169.6px;top:172.9px;font-size:15.5px;line-height:15.5px;color:#fafafa;transform:scaleX(1.210);">3.95</span><span class="t" style="left:237.4px;top:172.9px;font-size:15.5px;line-height:15.5px;color:#fafafa;transform:scaleX(1.210);">3.16</span><span class="t" style="left:309.2px;top:172.9px;font-size:15.5px;line-height:15.5px;color:#fafafa;transform:scaleX(1.210);">3.00</span><span class="t" style="left:381.1px;top:172.9px;font-size:15.5px;line-height:15.5px;color:#fafafa;transform:scaleX(1.210);">2.87</span><span class="t" style="left:452.9px;top:172.9px;font-size:15.5px;line-height:15.5px;color:#fafafa;transform:scaleX(1.210);">2.78</span><span class="t" style="left:524.6px;top:172.9px;font-size:15.5px;line-height:15.5px;color:#fafafa;transform:scaleX(1.210);">0.74</span><span class="t" style="left:582.2px;top:172.9px;font-size:15.5px;line-height:15.5px;color:#fafafa;transform:scaleX(1.210);">1.22</span><span class="t" style="left:667.9px;top:172.9px;font-size:15.5px;line-height:15.5px;color:#fafafa;transform:scaleX(1.210);">1.85</span><span class="t" style="left:754.8px;top:172.9px;font-size:15.5px;line-height:15.5px;color:#fafafa;transform:scaleX(1.210);">1.02</span><span class="t" style="left:832.0px;top:172.9px;font-size:15.5px;line-height:15.5px;color:#fafafa;transform:scaleX(1.210);">0.35</span><span class="t" style="left:898.9px;top:172.9px;font-size:15.5px;line-height:15.5px;color:#fafafa;transform:scaleX(1.210);">1.05</span><span class="t" style="left:1004.5px;top:172.9px;font-size:15.5px;line-height:15.5px;color:#fafafa;transform:scaleX(1.210);">1.08</span><span class="t" style="left:1117.0px;top:172.9px;font-size:15.5px;line-height:15.5px;color:#fafafa;transform:scaleX(1.210);">0.51</span><span class="t" style="left:1185.2px;top:172.9px;font-size:15.5px;line-height:15.5px;color:#fafafa;transform:scaleX(1.210);">0.83</span><span class="t" style="left:1301.3px;top:172.9px;font-size:15.5px;line-height:15.5px;color:#fafafa;transform:scaleX(1.210);">0.69</span><span class="t" style="left:16.4px;top:196.6px;font-size:15.5px;line-height:15.5px;color:#fafafa;font-weight:700;transform:scaleX(1.202);">ΔE ITP</span><span class="t" style="left:169.6px;top:196.6px;font-size:15.5px;line-height:15.5px;color:#fafafa;transform:scaleX(1.210);">2.47</span><span class="t" style="left:237.4px;top:196.6px;font-size:15.5px;line-height:15.5px;color:#fafafa;transform:scaleX(1.210);">2.11</span><span class="t" style="left:309.2px;top:196.6px;font-size:15.5px;line-height:15.5px;color:#fafafa;transform:scaleX(1.210);">2.08</span><span class="t" style="left:381.1px;top:196.6px;font-size:15.5px;line-height:15.5px;color:#fafafa;transform:scaleX(1.210);">2.34</span><span class="t" style="left:452.9px;top:196.6px;font-size:15.5px;line-height:15.5px;color:#fafafa;transform:scaleX(1.210);">2.57</span><span class="t" style="left:524.6px;top:196.6px;font-size:15.5px;line-height:15.5px;color:#fafafa;transform:scaleX(1.210);">85.13</span><span class="t" style="left:582.2px;top:196.6px;font-size:15.5px;line-height:15.5px;color:#fafafa;transform:scaleX(1.210);">2.29</span><span class="t" style="left:667.9px;top:196.6px;font-size:15.5px;line-height:15.5px;color:#fafafa;transform:scaleX(1.210);">2.40</span><span class="t" style="left:754.8px;top:196.6px;font-size:15.5px;line-height:15.5px;color:#fafafa;transform:scaleX(1.210);">2.05</span><span class="t" style="left:832.0px;top:196.6px;font-size:15.5px;line-height:15.5px;color:#fafafa;transform:scaleX(1.210);">1.23</span><span class="t" style="left:898.9px;top:196.6px;font-size:15.5px;line-height:15.5px;color:#fafafa;transform:scaleX(1.210);">2.07</span><span class="t" style="left:1004.5px;top:196.6px;font-size:15.5px;line-height:15.5px;color:#fafafa;transform:scaleX(1.210);">2.17</span><span class="t" style="left:1117.0px;top:196.6px;font-size:15.5px;line-height:15.5px;color:#fafafa;transform:scaleX(1.210);">1.41</span><span class="t" style="left:1185.2px;top:196.6px;font-size:15.5px;line-height:15.5px;color:#fafafa;transform:scaleX(1.210);">2.16</span><span class="t" style="left:1301.3px;top:196.6px;font-size:15.5px;line-height:15.5px;color:#fafafa;transform:scaleX(1.210);">1.73</span><span class="t" style="left:174.3px;top:5.9px;font-size:15.5px;line-height:15.5px;color:#fafafa;transform:scaleX(1.211);">White</span><span class="t" style="left:237.9px;top:5.9px;font-size:15.5px;line-height:15.5px;color:#fafafa;transform:scaleX(1.106);">Gray 80</span><span class="t" style="left:309.9px;top:5.9px;font-size:15.5px;line-height:15.5px;color:#fafafa;transform:scaleX(1.106);">Gray 65</span><span class="t" style="left:381.8px;top:5.9px;font-size:15.5px;line-height:15.5px;color:#fafafa;transform:scaleX(1.106);">Gray 50</span><span class="t" style="left:453.6px;top:5.9px;font-size:15.5px;line-height:15.5px;color:#fafafa;transform:scaleX(1.106);">Gray 35</span><span class="t" style="left:527.9px;top:5.9px;font-size:15.5px;line-height:15.5px;color:#fafafa;transform:scaleX(1.090);">Black</span><span class="t" style="left:582.2px;top:5.9px;font-size:15.5px;line-height:15.5px;color:#fafafa;transform:scaleX(1.107);">Dark Skin</span><span class="t" style="left:668.1px;top:5.9px;font-size:15.5px;line-height:15.5px;color:#fafafa;transform:scaleX(1.116);">Light Skin</span><span class="t" style="left:754.8px;top:5.9px;font-size:15.5px;line-height:15.5px;color:#fafafa;transform:scaleX(1.092);">Blue Sky</span><span class="t" style="left:832.0px;top:5.9px;font-size:15.5px;line-height:15.5px;color:#fafafa;transform:scaleX(1.102);">Foliage</span><span class="t" style="left:898.9px;top:5.9px;font-size:15.5px;line-height:15.5px;color:#fafafa;transform:scaleX(1.158);">Blue Flower</span><span class="t" style="left:1004.5px;top:5.9px;font-size:15.5px;line-height:15.5px;color:#fafafa;transform:scaleX(1.135);">Bluish Green</span><span class="t" style="left:1117.0px;top:5.9px;font-size:15.5px;line-height:15.5px;color:#fafafa;transform:scaleX(1.112);">Orange</span><span class="t" style="left:1185.2px;top:5.9px;font-size:15.5px;line-height:15.5px;color:#fafafa;transform:scaleX(1.153);">Purplish Blue</span><span class="t" style="left:1301.3px;top:5.9px;font-size:15.5px;line-height:15.5px;color:#fafafa;transform:scaleX(1.120);">Moderate Red</span></div><div style="left:553.4px;top:983.3px;width:1364px;height:14.7px;background:#616161"></div><div style="left:554.5px;top:984.3px;width:13.5px;height:12.7px;background:#858585;border-radius:3px"></div><svg style="left:554.5px;top:984.3px" width="14" height="13"><path d="M9.5 2v9l-6-4.5z" fill="#2a2a2a"/></svg><div style="left:1900.5px;top:984.3px;width:15px;height:12.7px;background:#858585;border-radius:3px"></div><svg style="left:1900.5px;top:984.3px" width="15" height="13"><path d="M5 2v9l6-4.5z" fill="#2a2a2a"/></svg><div style="left:572px;top:985px;width:660px;height:11.6px;background:#4a4a4a;border-radius:6px"></div><div style="left:225px;top:1075.6px;width:1695px;height:71px;background:#3f3f3f"></div><div style="left:225px;top:1075.6px;width:1331px;height:71px;overflow:hidden"><div style="left:-12.5px;top:0.7px;width:56px;height:54.7px;background:linear-gradient(#a2a2a2 0%,#8e8e8e 50%,#727272 100%);border-radius:6px;box-shadow:inset 0 0 3px rgba(0,0,0,.35)"></div><div style="left:-6.6px;top:6.3px;width:44.6px;height:27px;background:#c99b85;border-radius:4px;box-shadow:inset 0 1.5px 2px rgba(0,0,0,.45)"></div><span class="t" style="left:-11.9px;top:41.4px;font-size:11.8px;line-height:11.8px;color:#1e1e1e;font-weight:700;transform:scaleX(0.960);">Light Skin</span><div style="left:46px;top:0.7px;width:56px;height:54.7px;background:linear-gradient(#a2a2a2 0%,#8e8e8e 50%,#727272 100%);border-radius:6px;box-shadow:inset 0 0 3px rgba(0,0,0,.35)"></div><div style="left:51.9px;top:6.3px;width:44.6px;height:27px;background:#5f7ba0;border-radius:4px;box-shadow:inset 0 1.5px 2px rgba(0,0,0,.45)"></div><span class="t" style="left:50.1px;top:41.4px;font-size:11.8px;line-height:11.8px;color:#1e1e1e;font-weight:700;transform:scaleX(0.960);">Blue Sky</span><div style="left:104.5px;top:0.7px;width:56px;height:54.7px;background:linear-gradient(#a2a2a2 0%,#8e8e8e 50%,#727272 100%);border-radius:6px;box-shadow:inset 0 0 3px rgba(0,0,0,.35)"></div><div style="left:110.4px;top:6.3px;width:44.6px;height:27px;background:#5a6e44;border-radius:4px;box-shadow:inset 0 1.5px 2px rgba(0,0,0,.45)"></div><span class="t" style="left:112.7px;top:41.4px;font-size:11.8px;line-height:11.8px;color:#1e1e1e;font-weight:700;transform:scaleX(0.960);">Foliage</span><div style="left:163px;top:0.7px;width:56px;height:54.7px;background:linear-gradient(#a2a2a2 0%,#8e8e8e 50%,#727272 100%);border-radius:6px;box-shadow:inset 0 0 3px rgba(0,0,0,.35)"></div><div style="left:168.9px;top:6.3px;width:44.6px;height:13.6px;background:#8682b5;border-radius:4px;box-shadow:inset 0 1.5px 2px rgba(0,0,0,.45)"></div><span class="t" style="left:172.7px;top:27.9px;font-size:11.8px;line-height:11.8px;color:#1e1e1e;font-weight:700;transform:scaleX(0.960);">Blue</span><span class="t" style="left:172.7px;top:41.4px;font-size:11.8px;line-height:11.8px;color:#1e1e1e;font-weight:700;transform:scaleX(0.960);">Flower</span><div style="left:221.5px;top:0.7px;width:56px;height:54.7px;background:linear-gradient(#a2a2a2 0%,#8e8e8e 50%,#727272 100%);border-radius:6px;box-shadow:inset 0 0 3px rgba(0,0,0,.35)"></div><div style="left:227.4px;top:6.3px;width:44.6px;height:13.6px;background:#68bfac;border-radius:4px;box-shadow:inset 0 1.5px 2px rgba(0,0,0,.45)"></div><span class="t" style="left:232.2px;top:27.9px;font-size:11.8px;line-height:11.8px;color:#1e1e1e;font-weight:700;transform:scaleX(0.960);">Bluish</span><span class="t" style="left:232.2px;top:41.4px;font-size:11.8px;line-height:11.8px;color:#1e1e1e;font-weight:700;transform:scaleX(0.960);">Green</span><div style="left:280px;top:0.7px;width:56px;height:54.7px;background:linear-gradient(#a2a2a2 0%,#8e8e8e 50%,#727272 100%);border-radius:6px;box-shadow:inset 0 0 3px rgba(0,0,0,.35)"></div><div style="left:285.9px;top:6.3px;width:44.6px;height:27px;background:#dc7c2b;border-radius:4px;box-shadow:inset 0 1.5px 2px rgba(0,0,0,.45)"></div><span class="t" style="left:288.2px;top:41.4px;font-size:11.8px;line-height:11.8px;color:#1e1e1e;font-weight:700;transform:scaleX(0.960);">Orange</span><div style="left:338.5px;top:0.7px;width:56px;height:54.7px;background:linear-gradient(#a2a2a2 0%,#8e8e8e 50%,#727272 100%);border-radius:6px;box-shadow:inset 0 0 3px rgba(0,0,0,.35)"></div><div style="left:344.4px;top:6.3px;width:44.6px;height:13.6px;background:#4c5bab;border-radius:4px;box-shadow:inset 0 1.5px 2px rgba(0,0,0,.45)"></div><span class="t" style="left:343.8px;top:27.9px;font-size:11.8px;line-height:11.8px;color:#1e1e1e;font-weight:700;transform:scaleX(0.960);">Purplish</span><span class="t" style="left:343.8px;top:41.4px;font-size:11.8px;line-height:11.8px;color:#1e1e1e;font-weight:700;transform:scaleX(0.960);">Blue</span><div style="left:397px;top:0.7px;width:56px;height:54.7px;background:linear-gradient(#a2a2a2 0%,#8e8e8e 50%,#727272 100%);border-radius:6px;box-shadow:inset 0 0 3px rgba(0,0,0,.35)"></div><div style="left:402.9px;top:6.3px;width:44.6px;height:13.6px;background:#c8525f;border-radius:4px;box-shadow:inset 0 1.5px 2px rgba(0,0,0,.45)"></div><span class="t" style="left:399.8px;top:27.9px;font-size:11.8px;line-height:11.8px;color:#1e1e1e;font-weight:700;transform:scaleX(0.960);">Moderate</span><span class="t" style="left:399.8px;top:41.4px;font-size:11.8px;line-height:11.8px;color:#1e1e1e;font-weight:700;transform:scaleX(0.960);">Red</span><div style="left:455.5px;top:0.7px;width:56px;height:54.7px;background:linear-gradient(#a2a2a2 0%,#8e8e8e 50%,#727272 100%);border-radius:6px;box-shadow:inset 0 0 3px rgba(0,0,0,.35)"></div><div style="left:461.4px;top:6.3px;width:44.6px;height:27px;background:#5e3c6e;border-radius:4px;box-shadow:inset 0 1.5px 2px rgba(0,0,0,.45)"></div><span class="t" style="left:465.9px;top:41.4px;font-size:11.8px;line-height:11.8px;color:#1e1e1e;font-weight:700;transform:scaleX(0.960);">Purple</span><div style="left:514px;top:0.7px;width:56px;height:54.7px;background:linear-gradient(#a2a2a2 0%,#8e8e8e 50%,#727272 100%);border-radius:6px;box-shadow:inset 0 0 3px rgba(0,0,0,.35)"></div><div style="left:519.9px;top:6.3px;width:44.6px;height:13.6px;background:#a3c13d;border-radius:4px;box-shadow:inset 0 1.5px 2px rgba(0,0,0,.45)"></div><span class="t" style="left:524.4px;top:27.9px;font-size:11.8px;line-height:11.8px;color:#1e1e1e;font-weight:700;transform:scaleX(0.960);">Yellow</span><span class="t" style="left:524.4px;top:41.4px;font-size:11.8px;line-height:11.8px;color:#1e1e1e;font-weight:700;transform:scaleX(0.960);">Green</span><div style="left:572.5px;top:0.7px;width:56px;height:54.7px;background:linear-gradient(#a2a2a2 0%,#8e8e8e 50%,#727272 100%);border-radius:6px;box-shadow:inset 0 0 3px rgba(0,0,0,.35)"></div><div style="left:578.4px;top:6.3px;width:44.6px;height:13.6px;background:#eaa42c;border-radius:4px;box-shadow:inset 0 1.5px 2px rgba(0,0,0,.45)"></div><span class="t" style="left:580.7px;top:27.9px;font-size:11.8px;line-height:11.8px;color:#1e1e1e;font-weight:700;transform:scaleX(0.960);">Orange</span><span class="t" style="left:580.7px;top:41.4px;font-size:11.8px;line-height:11.8px;color:#1e1e1e;font-weight:700;transform:scaleX(0.960);">Yellow</span><div style="left:631px;top:0.7px;width:56px;height:54.7px;background:linear-gradient(#a2a2a2 0%,#8e8e8e 50%,#727272 100%);border-radius:6px;box-shadow:inset 0 0 3px rgba(0,0,0,.35)"></div><div style="left:636.9px;top:6.3px;width:44.6px;height:27px;background:#313da0;border-radius:4px;box-shadow:inset 0 1.5px 2px rgba(0,0,0,.45)"></div><span class="t" style="left:646.7px;top:41.4px;font-size:11.8px;line-height:11.8px;color:#1e1e1e;font-weight:700;transform:scaleX(0.960);">Blue</span><div style="left:689.5px;top:0.7px;width:56px;height:54.7px;background:linear-gradient(#a2a2a2 0%,#8e8e8e 50%,#727272 100%);border-radius:6px;box-shadow:inset 0 0 3px rgba(0,0,0,.35)"></div><div style="left:695.4px;top:6.3px;width:44.6px;height:27px;background:#48964c;border-radius:4px;box-shadow:inset 0 1.5px 2px rgba(0,0,0,.45)"></div><span class="t" style="left:701.1px;top:41.4px;font-size:11.8px;line-height:11.8px;color:#1e1e1e;font-weight:700;transform:scaleX(0.960);">Green</span><div style="left:748px;top:0.7px;width:56px;height:54.7px;background:linear-gradient(#a2a2a2 0%,#8e8e8e 50%,#727272 100%);border-radius:6px;box-shadow:inset 0 0 3px rgba(0,0,0,.35)"></div><div style="left:753.9px;top:6.3px;width:44.6px;height:27px;background:#b3323a;border-radius:4px;box-shadow:inset 0 1.5px 2px rgba(0,0,0,.45)"></div><span class="t" style="left:765.3px;top:41.4px;font-size:11.8px;line-height:11.8px;color:#1e1e1e;font-weight:700;transform:scaleX(0.960);">Red</span><div style="left:806.5px;top:0.7px;width:56px;height:54.7px;background:linear-gradient(#a2a2a2 0%,#8e8e8e 50%,#727272 100%);border-radius:6px;box-shadow:inset 0 0 3px rgba(0,0,0,.35)"></div><div style="left:812.4px;top:6.3px;width:44.6px;height:27px;background:#efc81f;border-radius:4px;box-shadow:inset 0 1.5px 2px rgba(0,0,0,.45)"></div><span class="t" style="left:816.9px;top:41.4px;font-size:11.8px;line-height:11.8px;color:#1e1e1e;font-weight:700;transform:scaleX(0.960);">Yellow</span><div style="left:865px;top:0.7px;width:56px;height:54.7px;background:linear-gradient(#a2a2a2 0%,#8e8e8e 50%,#727272 100%);border-radius:6px;box-shadow:inset 0 0 3px rgba(0,0,0,.35)"></div><div style="left:870.9px;top:6.3px;width:44.6px;height:27px;background:#c05898;border-radius:4px;box-shadow:inset 0 1.5px 2px rgba(0,0,0,.45)"></div><span class="t" style="left:870.0px;top:41.4px;font-size:11.8px;line-height:11.8px;color:#1e1e1e;font-weight:700;transform:scaleX(0.960);">Magenta</span><div style="left:923.5px;top:0.7px;width:56px;height:54.7px;background:linear-gradient(#a2a2a2 0%,#8e8e8e 50%,#727272 100%);border-radius:6px;box-shadow:inset 0 0 3px rgba(0,0,0,.35)"></div><div style="left:929.4px;top:6.3px;width:44.6px;height:27px;background:#0088a6;border-radius:4px;box-shadow:inset 0 1.5px 2px rgba(0,0,0,.45)"></div><span class="t" style="left:937.6px;top:41.4px;font-size:11.8px;line-height:11.8px;color:#1e1e1e;font-weight:700;transform:scaleX(0.960);">Cyan</span><div style="left:982px;top:0.7px;width:56px;height:54.7px;background:linear-gradient(#a2a2a2 0%,#8e8e8e 50%,#727272 100%);border-radius:6px;box-shadow:inset 0 0 3px rgba(0,0,0,.35)"></div><div style="left:987.9px;top:6.3px;width:44.6px;height:27px;background:#ff0000;border-radius:4px;box-shadow:inset 0 1.5px 2px rgba(0,0,0,.45)"></div><span class="t" style="left:983.2px;top:41.4px;font-size:11.8px;line-height:11.8px;color:#1e1e1e;font-weight:700;transform:scaleX(0.960);">100% Red</span><div style="left:1040.5px;top:0.7px;width:56px;height:54.7px;background:linear-gradient(#a2a2a2 0%,#8e8e8e 50%,#727272 100%);border-radius:6px;box-shadow:inset 0 0 3px rgba(0,0,0,.35)"></div><div style="left:1046.4px;top:6.3px;width:44.6px;height:13.6px;background:#00ff00;border-radius:4px;box-shadow:inset 0 1.5px 2px rgba(0,0,0,.45)"></div><span class="t" style="left:1052.1px;top:27.9px;font-size:11.8px;line-height:11.8px;color:#1e1e1e;font-weight:700;transform:scaleX(0.960);">100%</span><span class="t" style="left:1052.1px;top:41.4px;font-size:11.8px;line-height:11.8px;color:#1e1e1e;font-weight:700;transform:scaleX(0.960);">Green</span><div style="left:1099px;top:0.7px;width:56px;height:54.7px;background:linear-gradient(#a2a2a2 0%,#8e8e8e 50%,#727272 100%);border-radius:6px;box-shadow:inset 0 0 3px rgba(0,0,0,.35)"></div><div style="left:1104.9px;top:6.3px;width:44.6px;height:13.6px;background:#0000ff;border-radius:4px;box-shadow:inset 0 1.5px 2px rgba(0,0,0,.45)"></div><span class="t" style="left:1112.5px;top:27.9px;font-size:11.8px;line-height:11.8px;color:#1e1e1e;font-weight:700;transform:scaleX(0.960);">100%</span><span class="t" style="left:1112.5px;top:41.4px;font-size:11.8px;line-height:11.8px;color:#1e1e1e;font-weight:700;transform:scaleX(0.960);">Blue</span><div style="left:1157.5px;top:0.7px;width:56px;height:54.7px;background:linear-gradient(#a2a2a2 0%,#8e8e8e 50%,#727272 100%);border-radius:6px;box-shadow:inset 0 0 3px rgba(0,0,0,.35)"></div><div style="left:1163.4px;top:6.3px;width:44.6px;height:13.6px;background:#00ffff;border-radius:4px;box-shadow:inset 0 1.5px 2px rgba(0,0,0,.45)"></div><span class="t" style="left:1171.0px;top:27.9px;font-size:11.8px;line-height:11.8px;color:#1e1e1e;font-weight:700;transform:scaleX(0.960);">100%</span><span class="t" style="left:1171.0px;top:41.4px;font-size:11.8px;line-height:11.8px;color:#1e1e1e;font-weight:700;transform:scaleX(0.960);">Cyan</span><div style="left:1216px;top:0.7px;width:56px;height:54.7px;background:linear-gradient(#a2a2a2 0%,#8e8e8e 50%,#727272 100%);border-radius:6px;box-shadow:inset 0 0 3px rgba(0,0,0,.35)"></div><div style="left:1221.9px;top:6.3px;width:44.6px;height:13.6px;background:#ff00ff;border-radius:4px;box-shadow:inset 0 1.5px 2px rgba(0,0,0,.45)"></div><span class="t" style="left:1221.0px;top:27.9px;font-size:11.8px;line-height:11.8px;color:#1e1e1e;font-weight:700;transform:scaleX(0.960);">100%</span><span class="t" style="left:1221.0px;top:41.4px;font-size:11.8px;line-height:11.8px;color:#1e1e1e;font-weight:700;transform:scaleX(0.960);">Magenta</span><div style="left:1274.5px;top:0.7px;width:56px;height:54.7px;background:linear-gradient(#181818,#2a2a2a 60%,#3c3c3c);border-radius:6px;box-shadow:inset 0 0 3px rgba(0,0,0,.35)"></div><div style="left:1280.4px;top:6.3px;width:44.6px;height:13.6px;background:#ffff00;border-radius:4px;box-shadow:inset 0 1.5px 2px rgba(0,0,0,.45)"></div><span class="t" style="left:1284.9px;top:27.9px;font-size:11.8px;line-height:11.8px;color:#fff;font-weight:700;transform:scaleX(0.960);">100%</span><span class="t" style="left:1284.9px;top:41.4px;font-size:11.8px;line-height:11.8px;color:#fff;font-weight:700;transform:scaleX(0.960);">Yellow</span></div><div style="left:225px;top:1131.9px;width:1331px;height:14.1px;background:#616161"></div><div style="left:227px;top:1132.6px;width:12px;height:12.6px;background:#8a8a8a;border-radius:3px"></div><svg style="left:227px;top:1132.6px" width="12" height="13"><path d="M8.5 2v9l-6-4.5z" fill="#2a2a2a"/></svg><div style="left:1543.7px;top:1132.6px;width:12px;height:12.6px;background:#8a8a8a;border-radius:3px"></div><svg style="left:1543.7px;top:1132.6px" width="12" height="13"><path d="M3.5 2v9l6-4.5z" fill="#2a2a2a"/></svg><div style="left:555px;top:1133.2px;width:984px;height:11.6px;background:#4c4c4c;border-radius:6px"></div><div style="left:1557px;top:1076.3px;width:53.6px;height:20px;background:linear-gradient(#a0a0a0,#8a8a8a 50%,#6c6c6c);border-radius:6px 6px 0 0"></div><div style="left:1575.5px;top:1078.5px;width:17px;height:17px;border-radius:50%;background:radial-gradient(circle at 50% 35%,#6a6a6a,#7c7c7c 70%,#909090)"></div><svg style="left:1575.5px;top:1078.5px" width="17" height="17"><path d="M4 11h9l-4.5-5z" fill="#333"/></svg><div style="left:1557px;top:1097.8px;width:53.6px;height:46.6px;background:linear-gradient(#989898,#7c7c7c 50%,#666);border-radius:0 0 6px 6px"></div><div style="left:1566px;top:1103.8px;width:34.6px;height:34.4px;background:linear-gradient(#b8b8b8 0%,#a6a6a6 50%,#8a8a8a 51%,#9a9a9a 100%);border:2px solid #1c1c1c;border-radius:5px"></div><div style="left:1576px;top:1113.8px;width:15px;height:15px;background:linear-gradient(#1c1c1c 50%,#000 50%)"></div><div style="left:1612.4px;top:1076.2px;width:50px;height:34px;background:linear-gradient(#a8a8a8 0%,#8e8e8e 55%,#6a6a6a 100%);border-radius:5px 0 0 0;"></div><div style="left:1626.85px;top:1082px;width:22px;height:22px;border-radius:50%;background:radial-gradient(circle at 50% 35%,#5c5c5c,#707070 70%,#888);opacity:.55"></div><div style="left:1663.3px;top:1076.2px;width:50px;height:34px;background:linear-gradient(#a8a8a8 0%,#8e8e8e 55%,#6a6a6a 100%);"></div><div style="left:1677.75px;top:1082px;width:22px;height:22px;border-radius:50%;background:radial-gradient(circle at 50% 35%,#5c5c5c,#707070 70%,#888);opacity:.55"></div><div style="left:1714.2px;top:1076.2px;width:50.2px;height:34px;background:linear-gradient(#a8a8a8 0%,#8e8e8e 55%,#6a6a6a 100%);"></div><div style="left:1728.75px;top:1082px;width:22px;height:22px;border-radius:50%;background:radial-gradient(circle at 50% 35%,#5c5c5c,#707070 70%,#888);opacity:.55"></div><div style="left:1765.3px;top:1076.2px;width:49.5px;height:34px;background:linear-gradient(#a8a8a8 0%,#8e8e8e 55%,#6a6a6a 100%);"></div><div style="left:1779.5px;top:1082px;width:22px;height:22px;border-radius:50%;background:radial-gradient(circle at 50% 35%,#5c5c5c,#707070 70%,#888);opacity:.55"></div><div style="left:1815.7px;top:1076.2px;width:50.2px;height:34px;background:linear-gradient(#4c4c4c,#3e3e3e);"></div><div style="left:1830.25px;top:1082px;width:22px;height:22px;border-radius:50%;background:radial-gradient(circle at 50% 35%,#5c5c5c,#707070 70%,#888);opacity:.55"></div><div style="left:1866.8px;top:1076.2px;width:49.5px;height:34px;background:linear-gradient(#a8a8a8 0%,#8e8e8e 55%,#6a6a6a 100%);border-radius:0 5px 0 0;"></div><div style="left:1881px;top:1082px;width:22px;height:22px;border-radius:50%;background:radial-gradient(circle at 50% 35%,#5c5c5c,#707070 70%,#888);opacity:.55"></div><div style="left:1612.4px;top:1111.2px;width:152px;height:33.2px;background:linear-gradient(#a6a6a6 0%,#929292 55%,#828282 100%);border-radius:0 0 0 5px"></div><div style="left:1765.3px;top:1111.2px;width:152px;height:33.2px;background:linear-gradient(#a6a6a6 0%,#929292 55%,#828282 100%);border-radius:0 0 5px 0"></div><div style="left:1633px;top:1119px;width:22px;height:22px;border-radius:50%;background:radial-gradient(circle at 50% 35%,#707070,#848484 70%,#9a9a9a)"></div><div style="left:1877px;top:1118px;width:22px;height:22px;border-radius:50%;background:radial-gradient(circle at 50% 35%,#707070,#848484 70%,#9a9a9a)"></div><span class="t" style="left:1638.4px;top:1119.1px;font-size:20px;line-height:20px;color:#333;">«</span><span class="t" style="left:1882.4px;top:1118.6px;font-size:20px;line-height:20px;color:#333;">»</span><span class="t" style="left:1677.0px;top:1115.7px;font-size:24.5px;line-height:24.5px;color:#303030;transform:scaleX(1.032);">Back</span><span class="t" style="left:1797.4px;top:1115.7px;font-size:24.5px;line-height:24.5px;color:#303030;transform:scaleX(1.137);">Next</span><svg style="left:1612px;top:1076px" width="306" height="34" viewBox="1612 1076 306 34"><rect x="1633" y="1088" width="10" height="10" fill="#2a2a2a"/><path d="M1685 1087v12l10-6z" fill="#2a2a2a"/><text x="1739.5" y="1098" font-size="13" font-weight="700" fill="#2a2a2a" text-anchor="middle">[..]</text><text x="1790.5" y="1099" font-size="17" fill="#2a2a2a" text-anchor="middle">∞</text><path d="M1846.5 1093a5.5 5.5 0 1 1-2-4.2" fill="none" stroke="#1a1a1a" stroke-width="2"/><path d="M1842 1085.5l4 3.5-5 1.5z" fill="#1a1a1a"/><circle cx="1892" cy="1093" r="5" fill="none" stroke="#3a3a3a" stroke-width="1.6"/></svg><svg style="left:1620px;top:1076px" width="300" height="70" viewBox="1620 1076 300 70"><defs><filter id="wg" x="-5%" y="-20%" width="110%" height="140%"><feGaussianBlur in="SourceAlpha" stdDeviation="1.3" result="b"/><feFlood flood-color="#fff" flood-opacity=".8"/><feComposite in2="b" operator="in" result="g"/><feMerge><feMergeNode in="g"/><feMergeNode in="g"/><feMergeNode in="SourceGraphic"/></feMerge></filter></defs><g filter="url(#wg)" opacity=".8"><path d="M1631 1084.5L1669.5 1091L1672 1113.5L1641.5 1117L1698 1120L1657 1134.5L1632.6 1121.7Z" fill="none" stroke="#962a34" stroke-width="3.4" stroke-linejoin="round"/><path d="M1644.7 1095.8L1653.6 1106.3L1673.8 1084.5" fill="none" stroke="#3c3c3c" stroke-width="3.2"/><text x="1678.6" y="1111.2" font-size="23.5" font-weight="700" fill="#7c2229" stroke="#7c2229" stroke-width="1.3" textLength="144.4" lengthAdjust="spacingAndGlyphs">NOTEBOOK</text><text x="1824" y="1111.2" font-size="23.5" fill="#2c2c2c" stroke="#2c2c2c" stroke-width=".6" textLength="88" lengthAdjust="spacingAndGlyphs">CHECK</text></g></svg></body></html>
